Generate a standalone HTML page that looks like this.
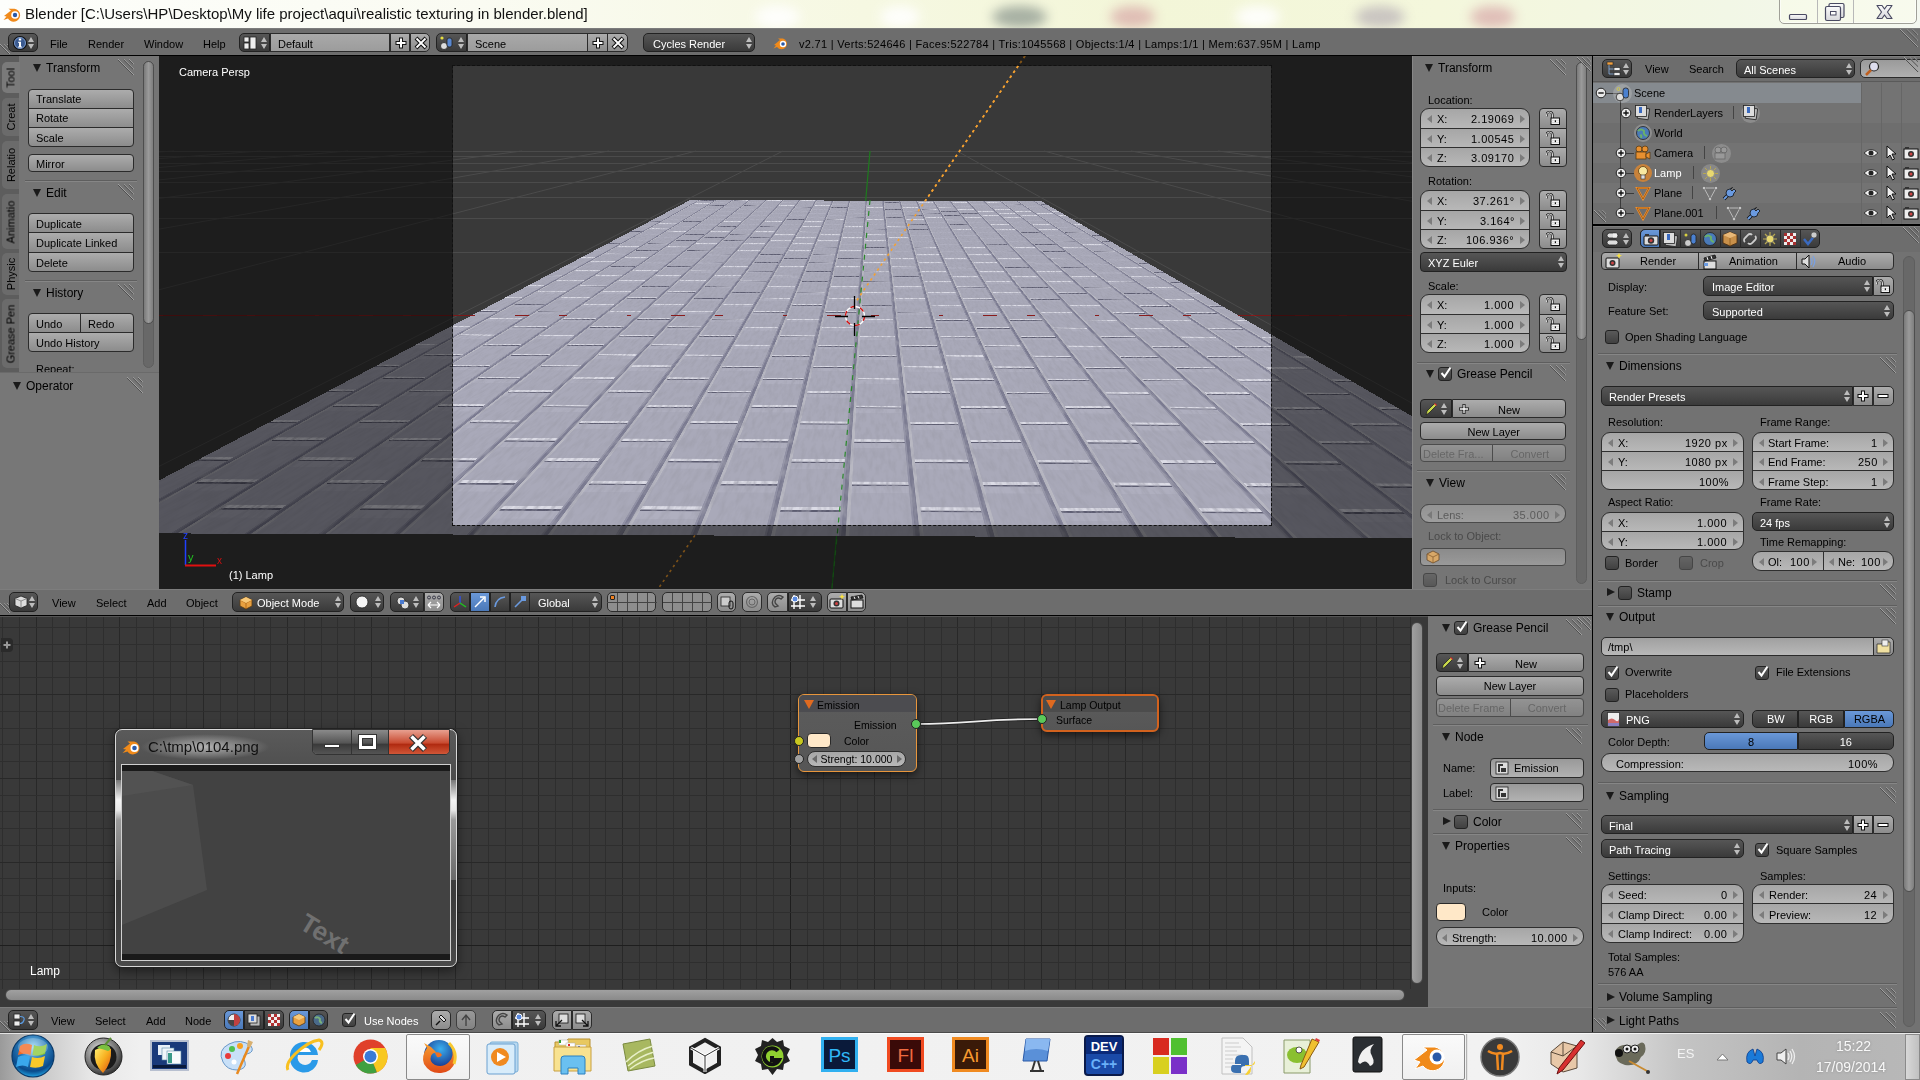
<!DOCTYPE html>
<html><head><meta charset="utf-8"><style>
*{margin:0;padding:0;box-sizing:border-box}
html,body{width:1920px;height:1080px;overflow:hidden;background:#000;font-family:"Liberation Sans",sans-serif;font-size:12px;color:#000}
.a{position:absolute}
.t{position:absolute;white-space:nowrap;line-height:14px;font-size:11px;will-change:transform}
.w{color:#fff}
.g{color:#4a4a4a}
.b{position:absolute;background:linear-gradient(#acacac,#8c8c8c);border:1px solid #2b2b2b;white-space:nowrap;font-size:12px;overflow:hidden}
.n{position:absolute;background:linear-gradient(#a6a6a6,#b8b8b8);border:1px solid #2f2f2f;white-space:nowrap;font-size:12px;overflow:hidden}
.m{position:absolute;background:linear-gradient(#565656,#3a3a3a);border:1px solid #222;color:#fff;white-space:nowrap;font-size:12px;overflow:hidden}
.tx{position:absolute;background:linear-gradient(#999,#b2b2b2);border:1px solid #2b2b2b;white-space:nowrap;font-size:12px;overflow:hidden}
.sel{background:linear-gradient(#6a98d8,#4a78b8)!important}
.c{position:absolute;width:14px;height:14px;background:linear-gradient(#5a5a5a,#404040);border:1px solid #222;border-radius:3px}
.hdr{position:absolute;background:#6d6d6d;border-top:1px solid #7d7d7d}
.sep{position:absolute;height:2px;border-top:1px solid #5e5e5e;border-bottom:1px solid #868686}
.tri{position:absolute;width:0;height:0;border-left:4.5px solid transparent;border-right:4.5px solid transparent;border-top:8px solid #1a1a1a}
.trr{position:absolute;width:0;height:0;border-top:4.5px solid transparent;border-bottom:4.5px solid transparent;border-left:8px solid #1a1a1a}
.arl{position:absolute;width:0;height:0;border-top:4px solid transparent;border-bottom:4px solid transparent;border-right:5px solid #7c7c7c}
.arr{position:absolute;width:0;height:0;border-top:4px solid transparent;border-bottom:4px solid transparent;border-left:5px solid #7c7c7c}
.ud{position:absolute;width:7px;height:14px}
.ud:before{content:"";position:absolute;left:0;top:1px;border-left:3.5px solid transparent;border-right:3.5px solid transparent;border-bottom:5px solid #bdbdbd}
.ud:after{content:"";position:absolute;left:0;top:8px;border-left:3.5px solid transparent;border-right:3.5px solid transparent;border-top:5px solid #bdbdbd}
.grip{position:absolute;width:16px;height:16px;background:repeating-linear-gradient(45deg,transparent 0 3px,#5a5a5a 3px 4px,#8a8a8a 4px 5px)}
.sb{position:absolute;border-radius:6px;border:1px solid #4e4e4e;background:linear-gradient(90deg,#7a7a7a,#9a9a9a 50%,#7e7e7e)}
.sbt{position:absolute;border-radius:6px;border:1px solid #5e5e5e;background:#686868}
</style></head><body>
<div class="a" id="title" style="left:0;top:0;width:1920px;height:28px;background:linear-gradient(90deg,#fdfefb 0%,#fafbf2 25%,#f6f8e2 45%,#f3f6d8 60%,#f4f7dc 75%,#f2f7e6 90%,#f4f7f0 100%)"></div>
<div class="a" style="left:0;top:28px;width:1920px;height:27px;background:#6d6d6d;border-top:1px solid #7c7c7c"></div>
<div class="a" style="left:0;top:55px;width:1920px;height:1px;background:#000"></div>
<div class="a" style="left:0;top:56px;width:159px;height:533px;background:#757575"></div>
<div class="a" id="view3d" style="left:159px;top:56px;width:1253px;height:533px;background:#393939;overflow:hidden">
<svg class="a" style="left:0;top:0" width="1253" height="533"><g stroke="#4b4b4b" stroke-width="1"><line x1="0" y1="95.5" x2="1253" y2="95.5"/><line x1="0" y1="100.5" x2="1253" y2="100.5"/><line x1="0" y1="107.5" x2="1253" y2="107.5"/><line x1="0" y1="115.5" x2="1253" y2="115.5"/><line x1="0" y1="126.5" x2="1253" y2="126.5"/><line x1="0" y1="141.5" x2="1253" y2="141.5"/><line x1="0" y1="162.5" x2="1253" y2="162.5"/><line x1="0" y1="196.5" x2="1253" y2="196.5"/><line x1="-507" y1="95" x2="-12142.6" y2="533"/><line x1="-420" y1="95" x2="-11227.2" y2="533"/><line x1="-333" y1="95" x2="-10311.8" y2="533"/><line x1="-246" y1="95" x2="-9396.39" y2="533"/><line x1="-159" y1="95" x2="-8481" y2="533"/><line x1="-72" y1="95" x2="-7565.61" y2="533"/><line x1="15" y1="95" x2="-6650.22" y2="533"/><line x1="102" y1="95" x2="-5734.83" y2="533"/><line x1="189" y1="95" x2="-4819.43" y2="533"/><line x1="276" y1="95" x2="-3904.04" y2="533"/><line x1="363" y1="95" x2="-2988.65" y2="533"/><line x1="450" y1="95" x2="-2073.26" y2="533"/><line x1="537" y1="95" x2="-1157.87" y2="533"/><line x1="624" y1="95" x2="-242.478" y2="533"/><line x1="798" y1="95" x2="1588.3" y2="533"/><line x1="885" y1="95" x2="2503.7" y2="533"/><line x1="972" y1="95" x2="3419.09" y2="533"/><line x1="1059" y1="95" x2="4334.48" y2="533"/><line x1="1146" y1="95" x2="5249.87" y2="533"/><line x1="1233" y1="95" x2="6165.26" y2="533"/><line x1="1320" y1="95" x2="7080.65" y2="533"/><line x1="1407" y1="95" x2="7996.04" y2="533"/><line x1="1494" y1="95" x2="8911.43" y2="533"/><line x1="1581" y1="95" x2="9826.83" y2="533"/><line x1="1668" y1="95" x2="10742.2" y2="533"/><line x1="1755" y1="95" x2="11657.6" y2="533"/><line x1="1842" y1="95" x2="12573" y2="533"/><line x1="1929" y1="95" x2="13488.4" y2="533"/></g><line x1="0" y1="259.5" x2="1253" y2="259.5" stroke="#7a1818" stroke-width="1"/><line x1="711" y1="95" x2="672.913" y2="533" stroke="#1e7a1e" stroke-width="1.2"/><line x1="866" y1="0" x2="499" y2="533" stroke="#f4a030" stroke-width="1.6" stroke-dasharray="2.5 3.5"/></svg>
<svg class="a" width="2100" height="2400" style="left:0;top:0;transform-origin:0 0;transform:matrix3d(0.1665537956,0.0002684541459,0,-7.758498968e-07,-0.2304996164,-0.01534145358,0,-0.0003228681766,0,0,1,0,530.8,144.2,0,1)">
<defs><pattern id="bp" width="200" height="100" patternUnits="userSpaceOnUse" x="50">
<rect width="200" height="100" fill="#a9a9b9"/>
<rect x="0" y="0" width="3" height="100" fill="#9090a4"/><rect x="3" y="0" width="6" height="100" fill="#7a7a90"/><rect x="9" y="0" width="5" height="100" fill="#b8b8c2"/>
<rect x="100" y="0" width="3" height="100" fill="#9090a4"/><rect x="103" y="0" width="6" height="100" fill="#7a7a90"/><rect x="109" y="0" width="5" height="100" fill="#b8b8c2"/>
<rect x="14" y="0" width="86" height="6" fill="#dcdce6"/><rect x="14" y="6" width="86" height="3" fill="#5c5c70"/>
<rect x="114" y="50" width="86" height="6" fill="#dcdce6"/><rect x="114" y="56" width="86" height="3" fill="#5c5c70"/>
<rect x="14" y="9" width="86" height="14" fill="#afafbf"/><rect x="114" y="59" width="86" height="14" fill="#afafbf"/>
</pattern></defs>
<filter id="nz" x="0" y="0" width="100%" height="100%"><feTurbulence type="fractalNoise" baseFrequency="0.12 0.04" numOctaves="3" seed="3"/><feColorMatrix type="matrix" values="0 0 0 0 0.35  0 0 0 0 0.35  0 0 0 0 0.42  0 0 0 1.6 -0.6"/></filter>
<rect width="2100" height="2400" fill="url(#bp)"/>
<rect width="2100" height="2400" filter="url(#nz)" opacity="1"/>
</svg>
<svg class="a" style="left:0;top:0" width="1253" height="533"><line x1="0" y1="259.5" x2="1253" y2="259.5" stroke="#8a1c1c" stroke-width="1" stroke-dasharray="4 40 14 30 8 60"/><line x1="711" y1="144" x2="672.913" y2="533" stroke="#2a8a2a" stroke-width="1.2" stroke-dasharray="5 6"/><line x1="866" y1="0" x2="696" y2="247" stroke="#f4a030" stroke-width="1.6" stroke-dasharray="2.5 3.5"/></svg>
<div class="a" style="left:0px;top:0px;width:1253px;height:10px;background:rgba(0,0,0,.49)"></div>
<div class="a" style="left:0px;top:469px;width:1253px;height:64px;background:rgba(0,0,0,.49)"></div>
<div class="a" style="left:0px;top:10px;width:294px;height:459px;background:rgba(0,0,0,.49)"></div>
<div class="a" style="left:1112px;top:10px;width:141px;height:459px;background:rgba(0,0,0,.49)"></div>
<div class="a" style="left:293px;top:9px;width:820px;height:461px;border:1px dashed #111"></div>
<svg class="a" style="left:675px;top:239px;" width="42" height="42"><circle cx="21" cy="21" r="9.5" fill="none" stroke="#fff" stroke-width="1.4"/><circle cx="21" cy="21" r="9.5" fill="none" stroke="#d01010" stroke-width="1.4" stroke-dasharray="4.97 4.97"/><path d="M1 21.5H14M28 21.5H41M20.5 1V14M20.5 28V41" stroke="#000" stroke-width="1.3"/></svg>
<div class="t w" style="left:20px;top:9px;font-size:11px">Camera Persp</div>
<div class="t w" style="left:70px;top:512px;font-size:11px">(1) Lamp</div>
<svg class="a" style="left:20px;top:472px;" width="50" height="40"><path d="M6.5 12V37" stroke="#2040ff" stroke-width="1.5"/><path d="M6 37.5H37" stroke="#e01010" stroke-width="2"/><text x="4" y="11" fill="#2040ff" font-size="10" font-family="Liberation Sans">z</text><text x="9" y="33" fill="#20c020" font-size="11" font-family="Liberation Sans">y</text><text x="38" y="36" fill="#d01010" font-size="10" font-family="Liberation Sans">x</text></svg>
</div>
<div class="a" style="left:1412px;top:56px;width:180px;height:533px;background:#757575;border-left:1px solid #878787"></div>
<div class="hdr" style="left:0;top:589px;width:1592px;height:26px"></div>
<div class="a" style="left:0;top:615px;width:1592px;height:1px;background:#000"></div>
<div class="a" style="left:0;top:616px;width:1428px;height:391px;background:#393939;overflow:hidden;border-top:1px solid #555">
<svg class="a" style="left:0;top:0" width="1428" height="391"><rect x="2" y="0" width="1" height="372" fill="#2e2e2e"/><rect x="19" y="0" width="1" height="372" fill="#2e2e2e"/><rect x="36" y="0" width="1" height="372" fill="#282828"/><rect x="52" y="0" width="1" height="372" fill="#2e2e2e"/><rect x="69" y="0" width="1" height="372" fill="#2e2e2e"/><rect x="86" y="0" width="1" height="372" fill="#2e2e2e"/><rect x="103" y="0" width="1" height="372" fill="#2e2e2e"/><rect x="119" y="0" width="1" height="372" fill="#282828"/><rect x="136" y="0" width="1" height="372" fill="#2e2e2e"/><rect x="153" y="0" width="1" height="372" fill="#2e2e2e"/><rect x="170" y="0" width="1" height="372" fill="#2e2e2e"/><rect x="186" y="0" width="1" height="372" fill="#2e2e2e"/><rect x="203" y="0" width="1" height="372" fill="#282828"/><rect x="220" y="0" width="1" height="372" fill="#2e2e2e"/><rect x="237" y="0" width="1" height="372" fill="#2e2e2e"/><rect x="254" y="0" width="1" height="372" fill="#2e2e2e"/><rect x="270" y="0" width="1" height="372" fill="#2e2e2e"/><rect x="287" y="0" width="1" height="372" fill="#282828"/><rect x="304" y="0" width="1" height="372" fill="#2e2e2e"/><rect x="321" y="0" width="1" height="372" fill="#2e2e2e"/><rect x="337" y="0" width="1" height="372" fill="#2e2e2e"/><rect x="354" y="0" width="1" height="372" fill="#2e2e2e"/><rect x="371" y="0" width="1" height="372" fill="#282828"/><rect x="388" y="0" width="1" height="372" fill="#2e2e2e"/><rect x="404" y="0" width="1" height="372" fill="#2e2e2e"/><rect x="421" y="0" width="1" height="372" fill="#2e2e2e"/><rect x="438" y="0" width="1" height="372" fill="#2e2e2e"/><rect x="455" y="0" width="1" height="372" fill="#282828"/><rect x="471" y="0" width="1" height="372" fill="#2e2e2e"/><rect x="488" y="0" width="1" height="372" fill="#2e2e2e"/><rect x="505" y="0" width="1" height="372" fill="#2e2e2e"/><rect x="522" y="0" width="1" height="372" fill="#2e2e2e"/><rect x="538" y="0" width="1" height="372" fill="#282828"/><rect x="555" y="0" width="1" height="372" fill="#2e2e2e"/><rect x="572" y="0" width="1" height="372" fill="#2e2e2e"/><rect x="589" y="0" width="1" height="372" fill="#2e2e2e"/><rect x="605" y="0" width="1" height="372" fill="#2e2e2e"/><rect x="622" y="0" width="1" height="372" fill="#282828"/><rect x="639" y="0" width="1" height="372" fill="#2e2e2e"/><rect x="656" y="0" width="1" height="372" fill="#2e2e2e"/><rect x="673" y="0" width="1" height="372" fill="#2e2e2e"/><rect x="689" y="0" width="1" height="372" fill="#2e2e2e"/><rect x="706" y="0" width="1" height="372" fill="#282828"/><rect x="723" y="0" width="1" height="372" fill="#2e2e2e"/><rect x="740" y="0" width="1" height="372" fill="#2e2e2e"/><rect x="756" y="0" width="1" height="372" fill="#2e2e2e"/><rect x="773" y="0" width="1" height="372" fill="#2e2e2e"/><rect x="790" y="0" width="1" height="372" fill="#1e1e1e"/><rect x="807" y="0" width="1" height="372" fill="#2e2e2e"/><rect x="823" y="0" width="1" height="372" fill="#2e2e2e"/><rect x="840" y="0" width="1" height="372" fill="#2e2e2e"/><rect x="857" y="0" width="1" height="372" fill="#2e2e2e"/><rect x="874" y="0" width="1" height="372" fill="#282828"/><rect x="890" y="0" width="1" height="372" fill="#2e2e2e"/><rect x="907" y="0" width="1" height="372" fill="#2e2e2e"/><rect x="924" y="0" width="1" height="372" fill="#2e2e2e"/><rect x="941" y="0" width="1" height="372" fill="#2e2e2e"/><rect x="957" y="0" width="1" height="372" fill="#282828"/><rect x="974" y="0" width="1" height="372" fill="#2e2e2e"/><rect x="991" y="0" width="1" height="372" fill="#2e2e2e"/><rect x="1008" y="0" width="1" height="372" fill="#2e2e2e"/><rect x="1024" y="0" width="1" height="372" fill="#2e2e2e"/><rect x="1041" y="0" width="1" height="372" fill="#282828"/><rect x="1058" y="0" width="1" height="372" fill="#2e2e2e"/><rect x="1075" y="0" width="1" height="372" fill="#2e2e2e"/><rect x="1092" y="0" width="1" height="372" fill="#2e2e2e"/><rect x="1108" y="0" width="1" height="372" fill="#2e2e2e"/><rect x="1125" y="0" width="1" height="372" fill="#282828"/><rect x="1142" y="0" width="1" height="372" fill="#2e2e2e"/><rect x="1159" y="0" width="1" height="372" fill="#2e2e2e"/><rect x="1175" y="0" width="1" height="372" fill="#2e2e2e"/><rect x="1192" y="0" width="1" height="372" fill="#2e2e2e"/><rect x="1209" y="0" width="1" height="372" fill="#282828"/><rect x="1226" y="0" width="1" height="372" fill="#2e2e2e"/><rect x="1242" y="0" width="1" height="372" fill="#2e2e2e"/><rect x="1259" y="0" width="1" height="372" fill="#2e2e2e"/><rect x="1276" y="0" width="1" height="372" fill="#2e2e2e"/><rect x="1293" y="0" width="1" height="372" fill="#282828"/><rect x="1309" y="0" width="1" height="372" fill="#2e2e2e"/><rect x="1326" y="0" width="1" height="372" fill="#2e2e2e"/><rect x="1343" y="0" width="1" height="372" fill="#2e2e2e"/><rect x="1360" y="0" width="1" height="372" fill="#2e2e2e"/><rect x="1376" y="0" width="1" height="372" fill="#282828"/><rect x="1393" y="0" width="1" height="372" fill="#2e2e2e"/><rect x="1410" y="0" width="1" height="372" fill="#2e2e2e"/><rect x="0" y="-7" width="1411" height="1" fill="#282828"/><rect x="0" y="10" width="1411" height="1" fill="#2e2e2e"/><rect x="0" y="27" width="1411" height="1" fill="#2e2e2e"/><rect x="0" y="44" width="1411" height="1" fill="#2e2e2e"/><rect x="0" y="60" width="1411" height="1" fill="#2e2e2e"/><rect x="0" y="77" width="1411" height="1" fill="#282828"/><rect x="0" y="94" width="1411" height="1" fill="#2e2e2e"/><rect x="0" y="111" width="1411" height="1" fill="#2e2e2e"/><rect x="0" y="127" width="1411" height="1" fill="#2e2e2e"/><rect x="0" y="144" width="1411" height="1" fill="#2e2e2e"/><rect x="0" y="161" width="1411" height="1" fill="#282828"/><rect x="0" y="178" width="1411" height="1" fill="#2e2e2e"/><rect x="0" y="194" width="1411" height="1" fill="#2e2e2e"/><rect x="0" y="211" width="1411" height="1" fill="#2e2e2e"/><rect x="0" y="228" width="1411" height="1" fill="#2e2e2e"/><rect x="0" y="245" width="1411" height="1" fill="#282828"/><rect x="0" y="261" width="1411" height="1" fill="#2e2e2e"/><rect x="0" y="278" width="1411" height="1" fill="#2e2e2e"/><rect x="0" y="295" width="1411" height="1" fill="#2e2e2e"/><rect x="0" y="312" width="1411" height="1" fill="#2e2e2e"/><rect x="0" y="328" width="1411" height="1" fill="#1e1e1e"/><rect x="0" y="345" width="1411" height="1" fill="#2e2e2e"/><rect x="0" y="362" width="1411" height="1" fill="#2e2e2e"/></svg>
</div>
<div class="a" style="left:1411px;top:622px;width:12px;height:362px;border-radius:6px;background:linear-gradient(90deg,#a0a0a0,#8a8a8a);border:1px solid #444"></div>
<div class="a" style="left:5px;top:989px;width:1400px;height:12px;border-radius:6px;background:linear-gradient(#a0a0a0,#8a8a8a);border:1px solid #444"></div>
<div class="a" style="left:1px;top:638px;width:12px;height:14px;background:#2a2a2a;border-radius:0 4px 4px 0"></div>
<svg class="a" style="left:2px;top:640px;" width="10" height="10"><path d="M5 1.5V8.5M1.5 5H8.5" stroke="#999" stroke-width="2"/></svg>
<div class="t w" style="left:30px;top:964px;font-size:12px">Lamp</div>
<svg class="a" style="left:900px;top:705px;" width="160" height="30"><path d="M16 19C70 19 80 14 142 14" fill="none" stroke="#222" stroke-width="3.5"/><path d="M16 19C70 19 80 14 142 14" fill="none" stroke="#eee" stroke-width="1.6"/></svg>
<div class="a" style="left:798px;top:694px;width:119px;height:78px;border-radius:6px;box-shadow:0 3px 8px rgba(0,0,0,.6);background:linear-gradient(#5c5c5c,#565656);border:1px solid #e8963c;overflow:hidden"><div class="a" style="left:0;top:0;width:117px;height:17px;background:#4c4c50"></div></div>
<div class="a" style="left:804px;top:700px;width:0;height:0;border-left:5px solid transparent;border-right:5px solid transparent;border-top:9px solid #e06a20"></div>
<div class="t " style="left:817px;top:697.5px;font-size:10.5px">Emission</div>
<div class="t " style="right:1023px;top:718px;font-size:10.5px">Emission</div>
<div class="a" style="left:807px;top:733px;width:24px;height:15px;border-radius:4px;background:#ffe8c8;border:1px solid #2a2a2a"></div>
<div class="t " style="left:844px;top:734px;font-size:10.5px">Color</div>
<div class="n" style="left:807px;top:751px;width:99px;height:16px;border-radius:8px"></div>
<div class="arl" style="left:812px;top:755px;border-right-color:#6a6a6a"></div><div class="arr" style="left:897px;top:755px;border-left-color:#6a6a6a"></div>
<div class="t " style="left:807px;width:99px;top:752px;text-align:center;font-size:10.5px">Strengt: 10.000</div>
<div class="a" style="left:911px;top:719px;width:10px;height:10px;border-radius:5px;background:#5ac85a;border:1px solid #222"></div>
<div class="a" style="left:794px;top:736px;width:10px;height:10px;border-radius:5px;background:#c8c820;border:1px solid #222"></div>
<div class="a" style="left:794px;top:754px;width:10px;height:10px;border-radius:5px;background:#a0a0a0;border:1px solid #222"></div>
<div class="a" style="left:1041px;top:694px;width:118px;height:38px;border-radius:6px;box-shadow:0 3px 8px rgba(0,0,0,.6);background:linear-gradient(#5c5c5c,#565656);border:2px solid #d2621e;overflow:hidden"><div class="a" style="left:0;top:0;width:114px;height:16px;background:#4c4c4c"></div></div>
<div class="a" style="left:1046px;top:700px;width:0;height:0;border-left:5px solid transparent;border-right:5px solid transparent;border-top:9px solid #e06a20"></div>
<div class="t " style="left:1060px;top:697.5px;font-size:10.5px">Lamp Output</div>
<div class="t " style="left:1056px;top:713px;font-size:10.5px">Surface</div>
<div class="a" style="left:1037px;top:714px;width:10px;height:10px;border-radius:5px;background:#5ac85a;border:1px solid #222"></div>
<div class="a" style="left:115px;top:729px;width:342px;height:238px;border-radius:7px;border:1px solid #d8d8d8;box-shadow:0 0 0 1px #222,0 4px 12px rgba(0,0,0,.5);background:linear-gradient(#5a5a5a,#464646 30%,#3c3c3c 70%,#4a4a4a)"></div>
<div class="a" style="left:116px;top:780px;width:5px;height:100px;background:linear-gradient(#777 0%,#f4f4f4 20%,#e8e8e8 30%,#9a9a9a 40%,#6a6a6a 100%)"></div>
<div class="a" style="left:451px;top:780px;width:5px;height:100px;background:linear-gradient(#777 0%,#f4f4f4 20%,#e8e8e8 30%,#9a9a9a 40%,#6a6a6a 100%)"></div>
<div class="a" style="left:140px;top:734px;width:130px;height:26px;border-radius:13px;background:radial-gradient(ellipse at center,rgba(255,255,255,.55),rgba(255,255,255,0) 70%)"></div>
<svg class="a" style="left:122px;top:737px;" width="21" height="20"><path d="M1 12 L8 6.5 L5.5 4.5 L12 4.5 A6.5 6.5 0 1 1 5.5 14.5 L0.5 16 L4 12.5Z" fill="#f08a1a"/><circle cx="12.5" cy="11" r="4" fill="#fff"/><circle cx="12.5" cy="11" r="2.3" fill="#2a5aa8"/></svg>
<div class="t" style="left:148px;top:738px;font-size:15px;line-height:18px;color:#111">C:\tmp\0104.png</div>
<div class="a" style="left:312px;top:729px;width:138px;height:26px;border-radius:0 0 5px 5px;border:1px solid #333;overflow:hidden;box-shadow:inset 0 0 0 1px rgba(255,255,255,.35)"><div class="a" style="left:0;top:0;width:38px;height:26px;background:linear-gradient(#8a8a8a,#555 50%,#3a3a3a 55%,#5a5a5a)"></div><div class="a" style="left:38px;top:0;width:1px;height:26px;background:#333"></div><div class="a" style="left:39px;top:0;width:36px;height:26px;background:linear-gradient(#8a8a8a,#555 50%,#3a3a3a 55%,#5a5a5a)"></div><div class="a" style="left:75px;top:0;width:1px;height:26px;background:#333"></div><div class="a" style="left:76px;top:0;width:62px;height:26px;background:linear-gradient(#e8a090,#c84a30 50%,#b02a10 55%,#d86040)"></div></div>
<div class="a" style="left:324px;top:744px;width:16px;height:4px;background:#fff;border:1px solid #333"></div>
<div class="a" style="left:359px;top:735px;width:17px;height:14px;border:3px solid #fff;box-shadow:0 0 0 1px #333,inset 0 0 0 1px #333"></div>
<svg class="a" style="left:405px;top:733px;" width="26" height="20"><path d="M6 3L20 17M20 3L6 17" stroke="#333" stroke-width="6"/><path d="M6.5 3.5L19.5 16.5M19.5 3.5L6.5 16.5" stroke="#fff" stroke-width="3.5"/></svg>
<div class="a" style="left:121px;top:764px;width:330px;height:197px;border:1px solid #d0d0d0;background:#1a1a1a"></div>
<div class="a" style="left:122px;top:771px;width:328px;height:183px;background:#424242;overflow:hidden"><svg class="a" style="left:0;top:0" width="328" height="183"><path d="M0 0H30L71 14L85 119L0 154Z" fill="#4c4c4c"/><path d="M0 0H30L71 14L0 25Z" fill="#525252"/><text x="0" y="0" transform="translate(176 157) rotate(31)" font-family="Liberation Sans" font-weight="bold" font-size="26" fill="#707070">Text</text></svg></div>
<div class="a" style="left:1428px;top:616px;width:164px;height:391px;background:#757575"></div>
<div class="tri" style="left:1441.5px;top:623.5px"></div>
<div class="c" style="left:1453.5px;top:620.5px"><svg width="14" height="14" style="position:absolute;left:0;top:-2px"><path d="M2.5 7L5.5 10.5L11.5 1.5" fill="none" stroke="#fff" stroke-width="2"/></svg></div>
<div class="t " style="left:1472.5px;top:620.5px;font-size:12px">Grease Pencil</div>
<svg class="a" style="left:1566px;top:618.5px" width="16" height="16"><path d="M0 0L16 16" stroke="#a0a0a0" stroke-width="1"/><path d="M0 1L15 16" stroke="#505050" stroke-width="1"/><path d="M5.76 0L16 10.24" stroke="#a0a0a0" stroke-width="1"/><path d="M5.76 1L15 10.24" stroke="#505050" stroke-width="1"/><path d="M10.88 0L16 5.12" stroke="#a0a0a0" stroke-width="1"/><path d="M10.88 1L15 5.12" stroke="#505050" stroke-width="1"/></svg>
<div class="m" style="left:1436px;top:653px;width:32px;height:19px;border-radius:4px 0 0 4px"></div>
<svg class="a" style="left:1439px;top:655px;" width="16" height="16"><path d="M3 14L4 10L12 2L14 4L6 12Z" fill="#c8d84a" stroke="#222" stroke-width="0.8"/><path d="M12 2L14 4L13 5L11 3Z" fill="#e04040"/></svg>
<div class="ud" style="left:1457px;top:656px"></div>
<div class="b" style="left:1468px;top:653px;width:116px;height:19px;border-radius:0 4px 4px 0"></div>
<div class="t " style="left:1468px;width:116px;top:656.5px;text-align:center">New</div>
<svg class="a" style="left:1473px;top:656px;" width="14" height="14"><path d="M7 1.5V12.5M1.5 7H12.5" stroke="#111" stroke-width="4"/><path d="M7 2.5V11.5M2.5 7H11.5" stroke="#fff" stroke-width="2"/></svg>
<div class="b" style="left:1436px;top:676px;width:148px;height:20px;border-radius:4px 4px 4px 4px"></div>
<div class="t " style="left:1436px;width:148px;top:679.25px;text-align:center">New Layer</div>
<div class="b" style="left:1436px;top:698px;width:75px;height:19px;border-radius:4px 0 0 4px"></div>
<div class="t " style="left:1438px;top:701px;color:#5a5a5a">Delete Frame</div>
<div class="b" style="left:1510px;top:698px;width:74px;height:19px;border-radius:0 4px 4px 0"></div>
<div class="t " style="left:1510px;width:74px;top:701px;text-align:center;color:#5a5a5a">Convert</div>
<div class="a" style="left:1436px;top:698px;width:148px;height:19px;background:rgba(117,117,117,.45);border-radius:4px"></div>
<div class="sep" style="left:1433px;top:724px;width:155px"></div>
<div class="tri" style="left:1441.5px;top:732.5px"></div>
<div class="t " style="left:1454.5px;top:729.5px;font-size:12px">Node</div>
<svg class="a" style="left:1566px;top:727.5px" width="16" height="16"><path d="M0 0L16 16" stroke="#a0a0a0" stroke-width="1"/><path d="M0 1L15 16" stroke="#505050" stroke-width="1"/><path d="M5.76 0L16 10.24" stroke="#a0a0a0" stroke-width="1"/><path d="M5.76 1L15 10.24" stroke="#505050" stroke-width="1"/><path d="M10.88 0L16 5.12" stroke="#a0a0a0" stroke-width="1"/><path d="M10.88 1L15 5.12" stroke="#505050" stroke-width="1"/></svg>
<div class="t " style="left:1443px;top:761px">Name:</div>
<div class="tx" style="left:1490px;top:758px;width:94px;height:20px;border-radius:4px"></div>
<svg class="a" style="left:1494px;top:760px;" width="16" height="16"><rect x="2" y="2" width="12" height="12" fill="#ddd" stroke="#222" stroke-width=".8"/><path d="M4 4H9V6H6V12H4Z M7 8H12V12H7Z" fill="#333"/></svg>
<div class="t " style="left:1514px;top:761px">Emission</div>
<div class="t " style="left:1443px;top:785.5px">Label:</div>
<div class="tx" style="left:1490px;top:783px;width:94px;height:19px;border-radius:4px"></div>
<svg class="a" style="left:1494px;top:785px;" width="16" height="16"><rect x="2" y="2" width="12" height="12" fill="#ddd" stroke="#222" stroke-width=".8"/><path d="M4 4H9V6H6V12H4Z M7 8H12V12H7Z" fill="#333"/></svg>
<div class="sep" style="left:1433px;top:809px;width:155px"></div>
<div class="trr" style="left:1442.5px;top:817px"></div>
<div class="c" style="left:1453.5px;top:814.5px"></div>
<div class="t " style="left:1472.5px;top:814.5px;font-size:12px">Color</div>
<svg class="a" style="left:1566px;top:812.5px" width="16" height="16"><path d="M0 0L16 16" stroke="#a0a0a0" stroke-width="1"/><path d="M0 1L15 16" stroke="#505050" stroke-width="1"/><path d="M5.76 0L16 10.24" stroke="#a0a0a0" stroke-width="1"/><path d="M5.76 1L15 10.24" stroke="#505050" stroke-width="1"/><path d="M10.88 0L16 5.12" stroke="#a0a0a0" stroke-width="1"/><path d="M10.88 1L15 5.12" stroke="#505050" stroke-width="1"/></svg>
<div class="sep" style="left:1433px;top:833px;width:155px"></div>
<div class="tri" style="left:1441.5px;top:841.5px"></div>
<div class="t " style="left:1454.5px;top:838.5px;font-size:12px">Properties</div>
<svg class="a" style="left:1566px;top:836.5px" width="16" height="16"><path d="M0 0L16 16" stroke="#a0a0a0" stroke-width="1"/><path d="M0 1L15 16" stroke="#505050" stroke-width="1"/><path d="M5.76 0L16 10.24" stroke="#a0a0a0" stroke-width="1"/><path d="M5.76 1L15 10.24" stroke="#505050" stroke-width="1"/><path d="M10.88 0L16 5.12" stroke="#a0a0a0" stroke-width="1"/><path d="M10.88 1L15 5.12" stroke="#505050" stroke-width="1"/></svg>
<div class="t " style="left:1443px;top:881px">Inputs:</div>
<div class="a" style="left:1436px;top:903px;width:30px;height:18px;border-radius:4px;background:#ffe8c8;border:1px solid #2a2a2a"></div>
<div class="t " style="left:1482px;top:905px">Color</div>
<div class="n" style="left:1436px;top:927px;width:148px;height:19px;border-radius:9px 9px 9px 9px"></div>
<div class="arl" style="left:1442px;top:934px"></div>
<div class="arr" style="left:1573px;top:934px"></div>
<div class="t " style="left:1452px;top:931px">Strength:</div>
<div class="t " style="right:352px;top:931px;letter-spacing:.5px">10.000</div>
<svg class="a" style="left:1578px;top:617px" width="13" height="13"><path d="M0 0L13 13" stroke="#a0a0a0" stroke-width="1"/><path d="M0 1L12 13" stroke="#505050" stroke-width="1"/><path d="M4.68 0L13 8.32" stroke="#a0a0a0" stroke-width="1"/><path d="M4.68 1L12 8.32" stroke="#505050" stroke-width="1"/><path d="M8.84 0L13 4.16" stroke="#a0a0a0" stroke-width="1"/><path d="M8.84 1L12 4.16" stroke="#505050" stroke-width="1"/></svg>
<div class="hdr" style="left:0;top:1007px;width:1592px;height:25px"></div>
<div class="a" style="left:1592px;top:56px;width:1px;height:976px;background:#000"></div>
<div class="a" style="left:1593px;top:56px;width:327px;height:168px;background:#727272"></div>
<div class="a" style="left:1593px;top:224px;width:327px;height:2px;background:#000"></div>
<div class="a" style="left:1593px;top:226px;width:327px;height:806px;background:#727272"></div>
<div class="a" style="left:0;top:56px;width:19px;height:316px;background:#5d5d5d"></div>
<div class="a" style="left:2px;top:62px;width:18px;height:31px;background:#7a7a7a;border-radius:5px 0 0 5px"></div>
<div class="t" style="left:-5px;top:70.5px;width:31px;height:14px;text-align:center;transform:rotate(-90deg);transform-origin:50% 50%">Tool</div>
<div class="a" style="left:2px;top:98px;width:17px;height:38px;background:#6b6b6b;border-radius:5px 0 0 5px"></div>
<div class="t" style="left:-8.5px;top:110px;width:38px;height:14px;text-align:center;transform:rotate(-90deg);transform-origin:50% 50%">Creat</div>
<div class="a" style="left:2px;top:141px;width:17px;height:48px;background:#6b6b6b;border-radius:5px 0 0 5px"></div>
<div class="t" style="left:-13.5px;top:158px;width:48px;height:14px;text-align:center;transform:rotate(-90deg);transform-origin:50% 50%">Relatio</div>
<div class="a" style="left:2px;top:194px;width:17px;height:55px;background:#6b6b6b;border-radius:5px 0 0 5px"></div>
<div class="t" style="left:-17px;top:214.5px;width:55px;height:14px;text-align:center;transform:rotate(-90deg);transform-origin:50% 50%">Animatio</div>
<div class="a" style="left:2px;top:253px;width:17px;height:42px;background:#6b6b6b;border-radius:5px 0 0 5px"></div>
<div class="t" style="left:-10.5px;top:267px;width:42px;height:14px;text-align:center;transform:rotate(-90deg);transform-origin:50% 50%">Physic</div>
<div class="a" style="left:2px;top:299px;width:17px;height:69px;background:#6b6b6b;border-radius:5px 0 0 5px"></div>
<div class="t" style="left:-24px;top:326.5px;width:69px;height:14px;text-align:center;transform:rotate(-90deg);transform-origin:50% 50%">Grease Pen</div>
<div class="tri" style="left:33px;top:63.5px"></div>
<div class="t " style="left:46px;top:60.5px;font-size:12px">Transform</div>
<svg class="a" style="left:118px;top:58.5px" width="16" height="16"><path d="M0 0L16 16" stroke="#a0a0a0" stroke-width="1"/><path d="M0 1L15 16" stroke="#505050" stroke-width="1"/><path d="M5.76 0L16 10.24" stroke="#a0a0a0" stroke-width="1"/><path d="M5.76 1L15 10.24" stroke="#505050" stroke-width="1"/><path d="M10.88 0L16 5.12" stroke="#a0a0a0" stroke-width="1"/><path d="M10.88 1L15 5.12" stroke="#505050" stroke-width="1"/></svg>
<div class="b" style="left:28px;top:89px;width:106px;height:20px;border-radius:4px 4px 0 0"></div>
<div class="t " style="left:35.5px;top:92px">Translate</div>
<div class="b" style="left:28px;top:108px;width:106px;height:21px;border-radius:0 0 0 0"></div>
<div class="t " style="left:35.5px;top:111.25px">Rotate</div>
<div class="b" style="left:28px;top:127px;width:106px;height:20px;border-radius:0 0 4px 4px"></div>
<div class="t " style="left:35.5px;top:130.75px">Scale</div>
<div class="b" style="left:28px;top:154px;width:106px;height:18px;border-radius:4px 4px 4px 4px"></div>
<div class="t " style="left:35.5px;top:156.75px">Mirror</div>
<div class="sep" style="left:25px;top:180px;width:112px"></div>
<div class="tri" style="left:33px;top:188.5px"></div>
<div class="t " style="left:46px;top:185.5px;font-size:12px">Edit</div>
<svg class="a" style="left:118px;top:183.5px" width="16" height="16"><path d="M0 0L16 16" stroke="#a0a0a0" stroke-width="1"/><path d="M0 1L15 16" stroke="#505050" stroke-width="1"/><path d="M5.76 0L16 10.24" stroke="#a0a0a0" stroke-width="1"/><path d="M5.76 1L15 10.24" stroke="#505050" stroke-width="1"/><path d="M10.88 0L16 5.12" stroke="#a0a0a0" stroke-width="1"/><path d="M10.88 1L15 5.12" stroke="#505050" stroke-width="1"/></svg>
<div class="b" style="left:28px;top:213px;width:106px;height:20px;border-radius:4px 4px 0 0"></div>
<div class="t " style="left:35.5px;top:216.5px">Duplicate</div>
<div class="b" style="left:28px;top:232px;width:106px;height:21px;border-radius:0 0 0 0"></div>
<div class="t " style="left:35.5px;top:236px">Duplicate Linked</div>
<div class="b" style="left:28px;top:252px;width:106px;height:20px;border-radius:0 0 4px 4px"></div>
<div class="t " style="left:35.5px;top:256px">Delete</div>
<div class="sep" style="left:25px;top:280px;width:112px"></div>
<div class="tri" style="left:33px;top:288.5px"></div>
<div class="t " style="left:46px;top:285.5px;font-size:12px">History</div>
<svg class="a" style="left:118px;top:283.5px" width="16" height="16"><path d="M0 0L16 16" stroke="#a0a0a0" stroke-width="1"/><path d="M0 1L15 16" stroke="#505050" stroke-width="1"/><path d="M5.76 0L16 10.24" stroke="#a0a0a0" stroke-width="1"/><path d="M5.76 1L15 10.24" stroke="#505050" stroke-width="1"/><path d="M10.88 0L16 5.12" stroke="#a0a0a0" stroke-width="1"/><path d="M10.88 1L15 5.12" stroke="#505050" stroke-width="1"/></svg>
<div class="b" style="left:28px;top:313px;width:53px;height:20px;border-radius:4px 0 0 0"></div>
<div class="t " style="left:35.5px;top:316.5px">Undo</div>
<div class="b" style="left:80px;top:313px;width:54px;height:20px;border-radius:0 4px 0 0"></div>
<div class="t " style="left:87.5px;top:316.5px">Redo</div>
<div class="b" style="left:28px;top:332px;width:106px;height:20px;border-radius:0 0 4px 4px"></div>
<div class="t " style="left:35.5px;top:336px">Undo History</div>
<div class="t " style="left:36px;top:362px">Repeat:</div>
<div class="sbt" style="left:143px;top:61px;width:11px;height:307px"></div>
<div class="sb" style="left:143px;top:61px;width:11px;height:263px"></div>
<div class="a" style="left:0;top:372px;width:159px;height:217px;background:#777;border-top:1px solid #6a6a6a"></div>
<div class="tri" style="left:13px;top:381.5px"></div>
<div class="t " style="left:26px;top:378.5px;font-size:12px">Operator</div>
<svg class="a" style="left:127px;top:376.5px" width="16" height="16"><path d="M0 0L16 16" stroke="#a0a0a0" stroke-width="1"/><path d="M0 1L15 16" stroke="#505050" stroke-width="1"/><path d="M5.76 0L16 10.24" stroke="#a0a0a0" stroke-width="1"/><path d="M5.76 1L15 10.24" stroke="#505050" stroke-width="1"/><path d="M10.88 0L16 5.12" stroke="#a0a0a0" stroke-width="1"/><path d="M10.88 1L15 5.12" stroke="#505050" stroke-width="1"/></svg>
<div class="tri" style="left:1425px;top:63.5px"></div>
<div class="t " style="left:1438px;top:60.5px;font-size:12px">Transform</div>
<svg class="a" style="left:1550px;top:58.5px" width="16" height="16"><path d="M0 0L16 16" stroke="#a0a0a0" stroke-width="1"/><path d="M0 1L15 16" stroke="#505050" stroke-width="1"/><path d="M5.76 0L16 10.24" stroke="#a0a0a0" stroke-width="1"/><path d="M5.76 1L15 10.24" stroke="#505050" stroke-width="1"/><path d="M10.88 0L16 5.12" stroke="#a0a0a0" stroke-width="1"/><path d="M10.88 1L15 5.12" stroke="#505050" stroke-width="1"/></svg>
<div class="t " style="left:1428px;top:92.5px">Location:</div>
<div class="n" style="left:1420px;top:108px;width:110px;height:21px;border-radius:9px 9px 0 0"></div>
<div class="arl" style="left:1426.5px;top:115.25px"></div>
<div class="arr" style="left:1519.5px;top:115.25px"></div>
<div class="t " style="left:1436.5px;top:112.25px">X:</div>
<div class="t " style="right:405.5px;top:112.25px;letter-spacing:.5px">2.19069</div>
<div class="b" style="left:1539px;top:108px;width:28px;height:21px;border-radius:4px 4px 0 0"></div>
<svg class="a" style="left:1546px;top:110.25px;" width="15" height="16"><path d="M6.5 8.5V5a3 3 0 0 0-6 0V6.5" fill="none" stroke="#111" stroke-width="2.2"/><path d="M6.5 8.5V5a3 3 0 0 0-6 0V6.5" fill="none" stroke="#f2f2f2" stroke-width="0.9"/><rect x="5" y="8" width="8.5" height="6.5" fill="#f2f2f2" stroke="#111" stroke-width="1"/><path d="M5.5 10.5H13M5.5 12.5H13" stroke="#ccc" stroke-width=".6"/><rect x="8.8" y="10.3" width="1.2" height="1.8" fill="#111"/></svg>
<div class="n" style="left:1420px;top:128px;width:110px;height:21px;border-radius:0 0 0 0"></div>
<div class="arl" style="left:1426.5px;top:134.75px"></div>
<div class="arr" style="left:1519.5px;top:134.75px"></div>
<div class="t " style="left:1436.5px;top:131.75px">Y:</div>
<div class="t " style="right:405.5px;top:131.75px;letter-spacing:.5px">1.00545</div>
<div class="b" style="left:1539px;top:128px;width:28px;height:21px;border-radius:0 0 0 0"></div>
<svg class="a" style="left:1546px;top:129.75px;" width="15" height="16"><path d="M6.5 8.5V5a3 3 0 0 0-6 0V6.5" fill="none" stroke="#111" stroke-width="2.2"/><path d="M6.5 8.5V5a3 3 0 0 0-6 0V6.5" fill="none" stroke="#f2f2f2" stroke-width="0.9"/><rect x="5" y="8" width="8.5" height="6.5" fill="#f2f2f2" stroke="#111" stroke-width="1"/><path d="M5.5 10.5H13M5.5 12.5H13" stroke="#ccc" stroke-width=".6"/><rect x="8.8" y="10.3" width="1.2" height="1.8" fill="#111"/></svg>
<div class="n" style="left:1420px;top:147px;width:110px;height:20px;border-radius:0 0 9px 9px"></div>
<div class="arl" style="left:1426.5px;top:154.25px"></div>
<div class="arr" style="left:1519.5px;top:154.25px"></div>
<div class="t " style="left:1436.5px;top:151.25px">Z:</div>
<div class="t " style="right:405.5px;top:151.25px;letter-spacing:.5px">3.09170</div>
<div class="b" style="left:1539px;top:147px;width:28px;height:20px;border-radius:0 0 4px 4px"></div>
<svg class="a" style="left:1546px;top:149.25px;" width="15" height="16"><path d="M6.5 8.5V5a3 3 0 0 0-6 0V6.5" fill="none" stroke="#111" stroke-width="2.2"/><path d="M6.5 8.5V5a3 3 0 0 0-6 0V6.5" fill="none" stroke="#f2f2f2" stroke-width="0.9"/><rect x="5" y="8" width="8.5" height="6.5" fill="#f2f2f2" stroke="#111" stroke-width="1"/><path d="M5.5 10.5H13M5.5 12.5H13" stroke="#ccc" stroke-width=".6"/><rect x="8.8" y="10.3" width="1.2" height="1.8" fill="#111"/></svg>
<div class="t " style="left:1428px;top:174px">Rotation:</div>
<div class="n" style="left:1420px;top:190px;width:110px;height:21px;border-radius:9px 9px 0 0"></div>
<div class="arl" style="left:1426.5px;top:197.25px"></div>
<div class="arr" style="left:1519.5px;top:197.25px"></div>
<div class="t " style="left:1436.5px;top:194.25px">X:</div>
<div class="t " style="right:405.5px;top:194.25px;letter-spacing:.5px">37.261°</div>
<div class="b" style="left:1539px;top:190px;width:28px;height:21px;border-radius:4px 4px 0 0"></div>
<svg class="a" style="left:1546px;top:192.25px;" width="15" height="16"><path d="M6.5 8.5V5a3 3 0 0 0-6 0V6.5" fill="none" stroke="#111" stroke-width="2.2"/><path d="M6.5 8.5V5a3 3 0 0 0-6 0V6.5" fill="none" stroke="#f2f2f2" stroke-width="0.9"/><rect x="5" y="8" width="8.5" height="6.5" fill="#f2f2f2" stroke="#111" stroke-width="1"/><path d="M5.5 10.5H13M5.5 12.5H13" stroke="#ccc" stroke-width=".6"/><rect x="8.8" y="10.3" width="1.2" height="1.8" fill="#111"/></svg>
<div class="n" style="left:1420px;top:210px;width:110px;height:21px;border-radius:0 0 0 0"></div>
<div class="arl" style="left:1426.5px;top:216.75px"></div>
<div class="arr" style="left:1519.5px;top:216.75px"></div>
<div class="t " style="left:1436.5px;top:213.75px">Y:</div>
<div class="t " style="right:405.5px;top:213.75px;letter-spacing:.5px">3.164°</div>
<div class="b" style="left:1539px;top:210px;width:28px;height:21px;border-radius:0 0 0 0"></div>
<svg class="a" style="left:1546px;top:211.75px;" width="15" height="16"><path d="M6.5 8.5V5a3 3 0 0 0-6 0V6.5" fill="none" stroke="#111" stroke-width="2.2"/><path d="M6.5 8.5V5a3 3 0 0 0-6 0V6.5" fill="none" stroke="#f2f2f2" stroke-width="0.9"/><rect x="5" y="8" width="8.5" height="6.5" fill="#f2f2f2" stroke="#111" stroke-width="1"/><path d="M5.5 10.5H13M5.5 12.5H13" stroke="#ccc" stroke-width=".6"/><rect x="8.8" y="10.3" width="1.2" height="1.8" fill="#111"/></svg>
<div class="n" style="left:1420px;top:229px;width:110px;height:20px;border-radius:0 0 9px 9px"></div>
<div class="arl" style="left:1426.5px;top:236.25px"></div>
<div class="arr" style="left:1519.5px;top:236.25px"></div>
<div class="t " style="left:1436.5px;top:233.25px">Z:</div>
<div class="t " style="right:405.5px;top:233.25px;letter-spacing:.5px">106.936°</div>
<div class="b" style="left:1539px;top:229px;width:28px;height:20px;border-radius:0 0 4px 4px"></div>
<svg class="a" style="left:1546px;top:231.25px;" width="15" height="16"><path d="M6.5 8.5V5a3 3 0 0 0-6 0V6.5" fill="none" stroke="#111" stroke-width="2.2"/><path d="M6.5 8.5V5a3 3 0 0 0-6 0V6.5" fill="none" stroke="#f2f2f2" stroke-width="0.9"/><rect x="5" y="8" width="8.5" height="6.5" fill="#f2f2f2" stroke="#111" stroke-width="1"/><path d="M5.5 10.5H13M5.5 12.5H13" stroke="#ccc" stroke-width=".6"/><rect x="8.8" y="10.3" width="1.2" height="1.8" fill="#111"/></svg>
<div class="m" style="left:1420px;top:252px;width:147px;height:20px;border-radius:4px 4px 4px 4px"></div>
<div class="t w" style="left:1427.5px;top:256.25px">XYZ Euler</div>
<div class="ud" style="left:1557.5px;top:255.25px"></div>
<div class="t " style="left:1428px;top:278.5px">Scale:</div>
<div class="n" style="left:1420px;top:294px;width:110px;height:21px;border-radius:9px 9px 0 0"></div>
<div class="arl" style="left:1426.5px;top:301.25px"></div>
<div class="arr" style="left:1519.5px;top:301.25px"></div>
<div class="t " style="left:1436.5px;top:298.25px">X:</div>
<div class="t " style="right:405.5px;top:298.25px;letter-spacing:.5px">1.000</div>
<div class="b" style="left:1539px;top:294px;width:28px;height:21px;border-radius:4px 4px 0 0"></div>
<svg class="a" style="left:1546px;top:296.25px;" width="15" height="16"><path d="M6.5 8.5V5a3 3 0 0 0-6 0V6.5" fill="none" stroke="#111" stroke-width="2.2"/><path d="M6.5 8.5V5a3 3 0 0 0-6 0V6.5" fill="none" stroke="#f2f2f2" stroke-width="0.9"/><rect x="5" y="8" width="8.5" height="6.5" fill="#f2f2f2" stroke="#111" stroke-width="1"/><path d="M5.5 10.5H13M5.5 12.5H13" stroke="#ccc" stroke-width=".6"/><rect x="8.8" y="10.3" width="1.2" height="1.8" fill="#111"/></svg>
<div class="n" style="left:1420px;top:314px;width:110px;height:21px;border-radius:0 0 0 0"></div>
<div class="arl" style="left:1426.5px;top:320.75px"></div>
<div class="arr" style="left:1519.5px;top:320.75px"></div>
<div class="t " style="left:1436.5px;top:317.75px">Y:</div>
<div class="t " style="right:405.5px;top:317.75px;letter-spacing:.5px">1.000</div>
<div class="b" style="left:1539px;top:314px;width:28px;height:21px;border-radius:0 0 0 0"></div>
<svg class="a" style="left:1546px;top:315.75px;" width="15" height="16"><path d="M6.5 8.5V5a3 3 0 0 0-6 0V6.5" fill="none" stroke="#111" stroke-width="2.2"/><path d="M6.5 8.5V5a3 3 0 0 0-6 0V6.5" fill="none" stroke="#f2f2f2" stroke-width="0.9"/><rect x="5" y="8" width="8.5" height="6.5" fill="#f2f2f2" stroke="#111" stroke-width="1"/><path d="M5.5 10.5H13M5.5 12.5H13" stroke="#ccc" stroke-width=".6"/><rect x="8.8" y="10.3" width="1.2" height="1.8" fill="#111"/></svg>
<div class="n" style="left:1420px;top:333px;width:110px;height:20px;border-radius:0 0 9px 9px"></div>
<div class="arl" style="left:1426.5px;top:340.25px"></div>
<div class="arr" style="left:1519.5px;top:340.25px"></div>
<div class="t " style="left:1436.5px;top:337.25px">Z:</div>
<div class="t " style="right:405.5px;top:337.25px;letter-spacing:.5px">1.000</div>
<div class="b" style="left:1539px;top:333px;width:28px;height:20px;border-radius:0 0 4px 4px"></div>
<svg class="a" style="left:1546px;top:335.25px;" width="15" height="16"><path d="M6.5 8.5V5a3 3 0 0 0-6 0V6.5" fill="none" stroke="#111" stroke-width="2.2"/><path d="M6.5 8.5V5a3 3 0 0 0-6 0V6.5" fill="none" stroke="#f2f2f2" stroke-width="0.9"/><rect x="5" y="8" width="8.5" height="6.5" fill="#f2f2f2" stroke="#111" stroke-width="1"/><path d="M5.5 10.5H13M5.5 12.5H13" stroke="#ccc" stroke-width=".6"/><rect x="8.8" y="10.3" width="1.2" height="1.8" fill="#111"/></svg>
<div class="sep" style="left:1417px;top:362px;width:153px"></div>
<div class="tri" style="left:1426px;top:369.5px"></div>
<div class="c" style="left:1438px;top:366.5px"><svg width="14" height="14" style="position:absolute;left:0;top:-2px"><path d="M2.5 7L5.5 10.5L11.5 1.5" fill="none" stroke="#fff" stroke-width="2"/></svg></div>
<div class="t " style="left:1457px;top:366.5px;font-size:12px">Grease Pencil</div>
<svg class="a" style="left:1550px;top:364.5px" width="16" height="16"><path d="M0 0L16 16" stroke="#a0a0a0" stroke-width="1"/><path d="M0 1L15 16" stroke="#505050" stroke-width="1"/><path d="M5.76 0L16 10.24" stroke="#a0a0a0" stroke-width="1"/><path d="M5.76 1L15 10.24" stroke="#505050" stroke-width="1"/><path d="M10.88 0L16 5.12" stroke="#a0a0a0" stroke-width="1"/><path d="M10.88 1L15 5.12" stroke="#505050" stroke-width="1"/></svg>
<div class="m" style="left:1420px;top:399px;width:32px;height:19px;border-radius:4px 0 0 4px"></div>
<svg class="a" style="left:1423px;top:401px;" width="16" height="16"><path d="M3 14L4 10L12 2L14 4L6 12Z" fill="#c8d84a" stroke="#222" stroke-width="0.8"/><path d="M12 2L14 4L13 5L11 3Z" fill="#e04040"/></svg>
<div class="ud" style="left:1441px;top:402px"></div>
<div class="b" style="left:1452px;top:399px;width:114px;height:19px;border-radius:0 4px 4px 0"></div>
<div class="t " style="left:1452px;width:114px;top:402.5px;text-align:center">New</div>
<svg class="a" style="left:1457px;top:402px;" width="14" height="14"><path d="M7 2V12M2 7H12" stroke="#111" stroke-width="3"/><path d="M7 2.8V11.2M2.8 7H11.2" stroke="#fff" stroke-width="1.3"/></svg>
<div class="b" style="left:1420px;top:422px;width:146px;height:18px;border-radius:4px 4px 4px 4px"></div>
<div class="t " style="left:1420.5px;width:145.5px;top:424.75px;text-align:center">New Layer</div>
<div class="b" style="left:1420px;top:444px;width:73px;height:18px;border-radius:4px 0 0 4px"></div>
<div class="t " style="left:1422.5px;top:446.75px;color:#5a5a5a">Delete Fra...</div>
<div class="b" style="left:1492px;top:444px;width:74px;height:18px;border-radius:0 4px 4px 0"></div>
<div class="t " style="left:1492.5px;width:73.5px;top:446.75px;text-align:center;color:#5a5a5a">Convert</div>
<div class="a" style="left:1420px;top:444px;width:146px;height:19px;background:rgba(117,117,117,.45);border-radius:4px"></div>
<div class="sep" style="left:1417px;top:470px;width:153px"></div>
<div class="tri" style="left:1426px;top:478.5px"></div>
<div class="t " style="left:1439px;top:475.5px;font-size:12px">View</div>
<svg class="a" style="left:1550px;top:473.5px" width="16" height="16"><path d="M0 0L16 16" stroke="#a0a0a0" stroke-width="1"/><path d="M0 1L15 16" stroke="#505050" stroke-width="1"/><path d="M5.76 0L16 10.24" stroke="#a0a0a0" stroke-width="1"/><path d="M5.76 1L15 10.24" stroke="#505050" stroke-width="1"/><path d="M10.88 0L16 5.12" stroke="#a0a0a0" stroke-width="1"/><path d="M10.88 1L15 5.12" stroke="#505050" stroke-width="1"/></svg>
<div class="n" style="left:1420px;top:504px;width:146px;height:19px;border-radius:9px 9px 9px 9px"></div>
<div class="arl" style="left:1426.5px;top:510.5px"></div>
<div class="arr" style="left:1555px;top:510.5px"></div>
<div class="t " style="left:1436.5px;top:507.5px;color:#4a4a4a">Lens:</div>
<div class="t " style="right:370px;top:507.5px;color:#4a4a4a;letter-spacing:.5px">35.000</div>
<div class="a" style="left:1420px;top:504px;width:146px;height:19px;background:rgba(117,117,117,.4);border-radius:9px"></div>
<div class="t g" style="left:1428px;top:529px">Lock to Object:</div>
<div class="tx" style="left:1420px;top:548px;width:146px;height:18px;border-radius:4px;opacity:.6"></div>
<svg class="a" style="left:1426px;top:550px;" width="14" height="14"><path d="M7 1L13 4V10L7 13L1 10V4Z" fill="#d8a868" stroke="#6a4a2a" stroke-width="0.8"/><path d="M1 4L7 7L13 4M7 7V13" fill="none" stroke="#8a6030" stroke-width="0.8"/></svg>
<div class="c" style="left:1423px;top:573px;opacity:.55"></div>
<div class="t g" style="left:1445px;top:572.5px">Lock to Cursor</div>
<div class="sbt" style="left:1576px;top:62px;width:11px;height:522px"></div>
<div class="sb" style="left:1576px;top:62px;width:11px;height:278px"></div>
<svg class="a" style="left:1577px;top:57px" width="14" height="14"><path d="M0 0L14 14" stroke="#a0a0a0" stroke-width="1"/><path d="M0 1L13 14" stroke="#505050" stroke-width="1"/><path d="M5.04 0L14 8.96" stroke="#a0a0a0" stroke-width="1"/><path d="M5.04 1L13 8.96" stroke="#505050" stroke-width="1"/><path d="M9.52 0L14 4.48" stroke="#a0a0a0" stroke-width="1"/><path d="M9.52 1L13 4.48" stroke="#505050" stroke-width="1"/></svg>
<svg class="a" style="left:0px;top:44px" width="10" height="10"><path d="M0 0L10 10" stroke="#a0a0a0" stroke-width="1"/><path d="M0 1L9 10" stroke="#505050" stroke-width="1"/><path d="M3.6 0L10 6.4" stroke="#a0a0a0" stroke-width="1"/><path d="M3.6 1L9 6.4" stroke="#505050" stroke-width="1"/><path d="M6.8 0L10 3.2" stroke="#a0a0a0" stroke-width="1"/><path d="M6.8 1L9 3.2" stroke="#505050" stroke-width="1"/></svg>
<svg class="a" style="left:0px;top:603px" width="10" height="10"><path d="M0 0L10 10" stroke="#a0a0a0" stroke-width="1"/><path d="M0 1L9 10" stroke="#505050" stroke-width="1"/><path d="M3.6 0L10 6.4" stroke="#a0a0a0" stroke-width="1"/><path d="M3.6 1L9 6.4" stroke="#505050" stroke-width="1"/><path d="M6.8 0L10 3.2" stroke="#a0a0a0" stroke-width="1"/><path d="M6.8 1L9 3.2" stroke="#505050" stroke-width="1"/></svg>
<svg class="a" style="left:0px;top:1021px" width="10" height="10"><path d="M0 0L10 10" stroke="#a0a0a0" stroke-width="1"/><path d="M0 1L9 10" stroke="#505050" stroke-width="1"/><path d="M3.6 0L10 6.4" stroke="#a0a0a0" stroke-width="1"/><path d="M3.6 1L9 6.4" stroke="#505050" stroke-width="1"/><path d="M6.8 0L10 3.2" stroke="#a0a0a0" stroke-width="1"/><path d="M6.8 1L9 3.2" stroke="#505050" stroke-width="1"/></svg>
<div class="m" style="left:8px;top:33px;width:30px;height:19px;border-radius:5px 5px 5px 5px"></div>
<svg class="a" style="left:11.5px;top:34.75px;" width="16" height="16"><circle cx="8" cy="8" r="6.5" fill="#3a5a90" stroke="#111" stroke-width="1.2"/><circle cx="8" cy="8" r="5.5" fill="none" stroke="#8aa8d8" stroke-width="0.8"/><rect x="6.8" y="3.5" width="2.4" height="2" fill="#fff"/><path d="M6 6.8H9V11.5H10V12.5H6V11.5H7V7.8H6Z" fill="#fff"/></svg>
<div class="ud" style="left:28px;top:35.75px"></div>
<div class="t " style="left:50px;top:37px">File</div>
<div class="t " style="left:88px;top:37px">Render</div>
<div class="t " style="left:144px;top:37px">Window</div>
<div class="t " style="left:203px;top:37px">Help</div>
<div class="m" style="left:239px;top:33px;width:31px;height:19px;border-radius:5px 0 0 5px"></div>
<svg class="a" style="left:242.5px;top:34.75px;" width="16" height="16"><rect x="1" y="2" width="5" height="5" fill="#eee" stroke="#222" stroke-width=".8"/><rect x="1" y="8" width="5" height="6" fill="#eee" stroke="#222" stroke-width=".8"/><rect x="7" y="2" width="6" height="12" fill="#eee" stroke="#222" stroke-width=".8"/></svg>
<div class="ud" style="left:261px;top:35.75px"></div>
<div class="tx" style="left:270px;top:33px;width:120px;height:19px;border-radius:0;background:linear-gradient(#a9a9a9,#9c9c9c)"></div>
<div class="t " style="left:278px;top:37px">Default</div>
<div class="b" style="left:390px;top:33px;width:20px;height:19px;border-radius:0"></div>
<svg class="a" style="left:393.5px;top:36px;" width="14" height="14"><path d="M7 1.5V12.5M1.5 7H12.5" stroke="#111" stroke-width="4"/><path d="M7 2.5V11.5M2.5 7H11.5" stroke="#fff" stroke-width="2"/></svg>
<div class="b" style="left:410px;top:33px;width:20px;height:19px;border-radius:0 5px 5px 0"></div>
<svg class="a" style="left:413.5px;top:36px;" width="14" height="14"><path d="M2 2L12 12M12 2L2 12" stroke="#111" stroke-width="4"/><path d="M2.5 2.5L11.5 11.5M11.5 2.5L2.5 11.5" stroke="#fff" stroke-width="1.8"/></svg>
<div class="m" style="left:436px;top:33px;width:31px;height:19px;border-radius:5px 0 0 5px"></div>
<svg class="a" style="left:439px;top:34.75px;" width="16" height="16"><circle cx="5" cy="11" r="3.5" fill="#ddd" stroke="#222" stroke-width=".8"/><rect x="8" y="3" width="5" height="9" rx="2" fill="#5a88d0" stroke="#222" stroke-width=".8"/><circle cx="3" cy="3" r="1.6" fill="#e8e040"/></svg>
<div class="ud" style="left:457.5px;top:35.75px"></div>
<div class="tx" style="left:467px;top:33px;width:121px;height:19px;border-radius:0;background:linear-gradient(#a9a9a9,#9c9c9c)"></div>
<div class="t " style="left:475px;top:37px">Scene</div>
<div class="b" style="left:587px;top:33px;width:21px;height:19px;border-radius:0"></div>
<svg class="a" style="left:590.5px;top:36px;" width="14" height="14"><path d="M7 1.5V12.5M1.5 7H12.5" stroke="#111" stroke-width="4"/><path d="M7 2.5V11.5M2.5 7H11.5" stroke="#fff" stroke-width="2"/></svg>
<div class="b" style="left:607px;top:33px;width:21px;height:19px;border-radius:0 5px 5px 0"></div>
<svg class="a" style="left:610.5px;top:36px;" width="14" height="14"><path d="M2 2L12 12M12 2L2 12" stroke="#111" stroke-width="4"/><path d="M2.5 2.5L11.5 11.5M11.5 2.5L2.5 11.5" stroke="#fff" stroke-width="1.8"/></svg>
<div class="m" style="left:643px;top:33px;width:112px;height:19px;border-radius:5px 5px 5px 5px"></div>
<div class="t w" style="left:652.5px;top:36.75px">Cycles Render</div>
<div class="ud" style="left:745.5px;top:35.75px"></div>
<svg class="a" style="left:772px;top:35px;" width="18" height="16"><path d="M2 10 L8 5 L6 3.5 L11 3.5 A5.5 5.5 0 1 1 5 12 L1.5 13.5 L4 10.5Z" fill="#f08a1a"/><circle cx="11" cy="9" r="3.2" fill="#fff"/><circle cx="11" cy="9" r="1.8" fill="#2a5aa8"/></svg>
<div class="t " style="left:799px;top:37px;letter-spacing:.3px">v2.71 | Verts:524646 | Faces:522784 | Tris:1045568 | Objects:1/4 | Lamps:1/1 | Mem:637.95M | Lamp</div>
<svg class="a" style="left:1900px;top:29px" width="18" height="18"><path d="M0 0L18 18" stroke="#a0a0a0" stroke-width="1"/><path d="M0 1L17 18" stroke="#505050" stroke-width="1"/><path d="M6.48 0L18 11.52" stroke="#a0a0a0" stroke-width="1"/><path d="M6.48 1L17 11.52" stroke="#505050" stroke-width="1"/><path d="M12.24 0L18 5.76" stroke="#a0a0a0" stroke-width="1"/><path d="M12.24 1L17 5.76" stroke="#505050" stroke-width="1"/></svg>
<div class="m" style="left:9px;top:592px;width:29px;height:20px;border-radius:5px 5px 5px 5px"></div>
<svg class="a" style="left:12.5px;top:594px;" width="16" height="16"><path d="M8 2L14 4.5V11.5L8 14L2 11.5V4.5Z" fill="#ddd" stroke="#222" stroke-width=".8"/><path d="M2 4.5L8 7L14 4.5M8 7V14" fill="none" stroke="#777" stroke-width=".8"/></svg>
<div class="ud" style="left:29px;top:595px"></div>
<div class="t " style="left:52px;top:596px">View</div>
<div class="t " style="left:96px;top:596px">Select</div>
<div class="t " style="left:147px;top:596px">Add</div>
<div class="t " style="left:186px;top:596px">Object</div>
<div class="m" style="left:232px;top:592px;width:112px;height:20px;border-radius:5px 5px 5px 5px"></div>
<div class="t w" style="left:256.5px;top:596px">Object Mode</div>
<div class="ud" style="left:335px;top:595px"></div>
<svg class="a" style="left:238px;top:594.5px;" width="16" height="16"><path d="M8 2L14 5V11L8 14L2 11V5Z" fill="#e8a040" stroke="#5a3a10" stroke-width=".8"/><path d="M2 5L8 8L14 5M8 8V14" fill="none" stroke="#a86010" stroke-width=".8"/><path d="M8 2L14 5L8 8L2 5Z" fill="#f8c878"/></svg>
<div class="m" style="left:350px;top:592px;width:34px;height:20px;border-radius:5px 5px 5px 5px"></div>
<svg class="a" style="left:353.5px;top:594px;" width="16" height="16"><circle cx="8" cy="8" r="6" fill="#f4f4f4" stroke="#222" stroke-width=".8"/></svg>
<div class="ud" style="left:375px;top:595px"></div>
<div class="m" style="left:390px;top:592px;width:34px;height:20px;border-radius:5px 0 0 5px"></div>
<svg class="a" style="left:395px;top:595px;" width="16" height="16"><circle cx="6" cy="6" r="4" fill="#ddd" stroke="#222" stroke-width=".8"/><circle cx="10" cy="10" r="4" fill="#ddd" stroke="#222" stroke-width=".8"/><rect x="5" y="5" width="4" height="4" fill="#4a7ad0"/></svg>
<div class="ud" style="left:413px;top:595px"></div>
<div class="b" style="left:424px;top:592px;width:20px;height:20px;border-radius:0 5px 5px 0"></div>
<svg class="a" style="left:426px;top:595px;" width="16" height="14"><circle cx="3" cy="2.5" r="1.5" fill="none" stroke="#223" stroke-width=".8"/><circle cx="8" cy="2.5" r="1.5" fill="none" stroke="#223" stroke-width=".8"/><circle cx="13" cy="2.5" r="1.5" fill="none" stroke="#223" stroke-width=".8"/><path d="M2 10H14M2 10L5 7M2 10L5 13M14 10L11 7M14 10L11 13" stroke="#fff" stroke-width="1.2" fill="none"/></svg>
<div class="m" style="left:450px;top:592px;width:20px;height:20px;border-radius:5px 0 0 5px"></div>
<svg class="a" style="left:452px;top:594px;" width="16" height="16"><path d="M8 9V2" stroke="#3050e0" stroke-width="1.5"/><path d="M8 9L2 13" stroke="#e02020" stroke-width="1.5"/><path d="M8 9L14 13" stroke="#20c020" stroke-width="1.5"/></svg>
<div class="m sel" style="left:470px;top:592px;width:20px;height:20px;border-radius:0"></div>
<svg class="a" style="left:472px;top:594px;" width="16" height="16"><path d="M3 13L12 4" stroke="#fff" stroke-width="1.5"/><path d="M8 3H13V8" fill="none" stroke="#fff" stroke-width="1.5"/></svg>
<div class="m" style="left:490px;top:592px;width:20px;height:20px;border-radius:0"></div>
<svg class="a" style="left:492px;top:594px;" width="16" height="16"><path d="M3 13Q4 4 13 3" stroke="#6a9ae0" stroke-width="1.6" fill="none"/></svg>
<div class="m" style="left:510px;top:592px;width:20px;height:20px;border-radius:0"></div>
<svg class="a" style="left:512px;top:594px;" width="16" height="16"><path d="M3 13L10 6" stroke="#6a9ae0" stroke-width="1.6"/><rect x="9" y="2" width="5" height="5" fill="#6a9ae0"/></svg>
<div class="m" style="left:529px;top:592px;width:73px;height:20px;border-radius:0 5px 5px 0"></div>
<div class="t w" style="left:537.5px;top:596px">Global</div>
<div class="ud" style="left:592px;top:595px"></div>
<div class="b" style="left:607px;top:592px;width:49px;height:20px;border-radius:5px 5px 5px 5px;background:#8e8e8e"></div>
<div class="a" style="left:616.9px;top:593px;width:1px;height:18px;background:#444"></div>
<div class="a" style="left:626.8px;top:593px;width:1px;height:18px;background:#444"></div>
<div class="a" style="left:636.7px;top:593px;width:1px;height:18px;background:#444"></div>
<div class="a" style="left:646.6px;top:593px;width:1px;height:18px;background:#444"></div>
<div class="a" style="left:607px;top:602px;width:49.5px;height:1px;background:#444"></div>
<div class="a" style="left:610px;top:595px;width:5px;height:5px;background:#f08020;border:1px solid #222;border-radius:1px"></div>
<div class="b" style="left:662px;top:592px;width:50px;height:20px;border-radius:5px 5px 5px 5px;background:#8e8e8e"></div>
<div class="a" style="left:672.3px;top:593px;width:1px;height:18px;background:#444"></div>
<div class="a" style="left:682.1px;top:593px;width:1px;height:18px;background:#444"></div>
<div class="a" style="left:691.9px;top:593px;width:1px;height:18px;background:#444"></div>
<div class="a" style="left:701.7px;top:593px;width:1px;height:18px;background:#444"></div>
<div class="a" style="left:662.5px;top:602px;width:49px;height:1px;background:#444"></div>
<div class="b" style="left:717px;top:592px;width:19px;height:20px;border-radius:5px 5px 5px 5px"></div>
<svg class="a" style="left:719px;top:594px;" width="16" height="16"><rect x="2" y="3" width="9" height="9" fill="#ccc" stroke="#222" stroke-width=".8"/><path d="M10 9a2 2 0 1 1 4 0V13a2 2 0 1 1 -4 0Z" fill="none" stroke="#111" stroke-width="1"/></svg>
<div class="b" style="left:742px;top:592px;width:20px;height:20px;border-radius:5px 5px 5px 5px"></div>
<svg class="a" style="left:744px;top:594px;" width="16" height="16"><circle cx="8" cy="8" r="5.5" fill="none" stroke="#666" stroke-width="1.2"/><circle cx="8" cy="8" r="3" fill="none" stroke="#666" stroke-width="1"/></svg>
<div class="b" style="left:767px;top:592px;width:21px;height:20px;border-radius:5px 0 0 5px"></div>
<svg class="a" style="left:770px;top:594px;" width="16" height="16"><path d="M5 13L3 11Q1 7 5 3Q9 0 13 3L11 5Q8 3 6 5Q4 8 6 10L8 12Z" fill="none" stroke="#444" stroke-width="1.4"/></svg>
<div class="m" style="left:788px;top:592px;width:34px;height:20px;border-radius:0 5px 5px 0"></div>
<svg class="a" style="left:790px;top:594px;" width="16" height="16"><path d="M4 1V15M10 1V15M1 6H15M1 12H15" stroke="#fff" stroke-width="1.4"/><circle cx="5" cy="5" r="3" fill="#5a8ae0" stroke="#fff" stroke-width="1"/></svg>
<div class="ud" style="left:810px;top:595px"></div>
<div class="b" style="left:827px;top:592px;width:20px;height:20px;border-radius:5px 0 0 5px"></div>
<svg class="a" style="left:829px;top:594px;" width="16" height="16"><rect x="1" y="5" width="13" height="9" rx="1" fill="#ddd" stroke="#111" stroke-width="1"/><circle cx="7.5" cy="9.5" r="3" fill="#333"/><circle cx="7.5" cy="9.5" r="1.5" fill="#d04040"/><path d="M13 0L14 2L16 2.5L14 3.5L13 5.5L12 3.5L10 2.5L12 2Z" fill="#f8e040"/></svg>
<div class="b" style="left:847px;top:592px;width:19px;height:20px;border-radius:0 5px 5px 0"></div>
<svg class="a" style="left:849px;top:594px;" width="16" height="16"><rect x="2" y="6" width="12" height="8" fill="#ddd" stroke="#111" stroke-width="1"/><path d="M2 3L13 1L14 4L3 6Z" fill="#333" stroke="#111" stroke-width=".8"/><path d="M5 2.5L6 5M9 2L10 4.5" stroke="#eee" stroke-width="1"/></svg>
<div class="m" style="left:8px;top:1010px;width:30px;height:20px;border-radius:5px 5px 5px 5px"></div>
<svg class="a" style="left:11.5px;top:1012px;" width="16" height="16"><rect x="2" y="2" width="6" height="5" fill="#eee" stroke="#222" stroke-width=".8"/><rect x="2" y="9" width="6" height="5" fill="#eee" stroke="#222" stroke-width=".8"/><path d="M8 4.5Q13 4.5 12 8Q11 11.5 8 11.5" stroke="#5a9ae0" stroke-width="1.2" fill="none"/></svg>
<div class="ud" style="left:28px;top:1013px"></div>
<div class="t " style="left:50.5px;top:1014px">View</div>
<div class="t " style="left:95px;top:1014px">Select</div>
<div class="t " style="left:146px;top:1014px">Add</div>
<div class="t " style="left:185px;top:1014px">Node</div>
<div class="m sel" style="left:224px;top:1010px;width:20px;height:20px;border-radius:5px 0 0 5px"></div>
<svg class="a" style="left:226px;top:1012px;" width="16" height="16"><circle cx="8" cy="8" r="6" fill="#eee" stroke="#222" stroke-width=".8"/><path d="M8 2A6 6 0 0 1 8 14Z" fill="#c04040"/><path d="M8 8L2 8A6 6 0 0 0 8 14Z" fill="#444"/></svg>
<div class="m" style="left:244px;top:1010px;width:20px;height:20px;border-radius:0"></div>
<svg class="a" style="left:246px;top:1012px;" width="16" height="16"><rect x="4" y="4" width="10" height="10" fill="#bbb" stroke="#222" stroke-width=".8"/><rect x="2" y="2" width="9" height="9" fill="#ddd" stroke="#222" stroke-width=".8"/><rect x="5" y="4" width="3" height="5" fill="#4a7ad0"/></svg>
<div class="m" style="left:264px;top:1010px;width:20px;height:20px;border-radius:0 5px 5px 0"></div>
<svg class="a" style="left:266px;top:1012px;" width="16" height="16"><rect x="2" y="2" width="12" height="12" fill="#eee"/><path d="M2 2H5V5H2ZM8 2H11V5H8ZM5 5H8V8H5ZM11 5H14V8H11ZM2 8H5V11H2ZM8 8H11V11H8ZM5 11H8V14H5ZM11 11H14V14H11Z" fill="#b03030"/></svg>
<div class="m sel" style="left:289px;top:1010px;width:20px;height:20px;border-radius:5px 0 0 5px"></div>
<svg class="a" style="left:291px;top:1012px;" width="16" height="16"><path d="M8 2L14 5V11L8 14L2 11V5Z" fill="#e8a040" stroke="#5a3a10" stroke-width=".8"/><path d="M8 2L14 5L8 8L2 5Z" fill="#f8c878"/></svg>
<div class="m" style="left:309px;top:1010px;width:19px;height:20px;border-radius:0 5px 5px 0"></div>
<svg class="a" style="left:311px;top:1012px;" width="16" height="16"><circle cx="8" cy="8" r="6" fill="#4a6a8a" stroke="#222" stroke-width=".8"/><path d="M4 6Q7 4 9 7Q8 10 11 11" stroke="#7ab07a" stroke-width="2" fill="none"/></svg>
<div class="c" style="left:342px;top:1013px"><svg width="14" height="14" style="position:absolute;left:0;top:-2px"><path d="M2.5 7L5.5 10.5L11.5 1.5" fill="none" stroke="#fff" stroke-width="2"/></svg></div>
<div class="t w" style="left:364px;top:1014px">Use Nodes</div>
<div class="b" style="left:431px;top:1010px;width:20px;height:20px;border-radius:5px 5px 5px 5px"></div>
<svg class="a" style="left:433px;top:1012px;" width="16" height="16"><path d="M3 13L7 9" stroke="#111" stroke-width="1.5"/><path d="M6 5L11 10L13 8L8 3Z" fill="#ddd" stroke="#111" stroke-width="1"/></svg>
<div class="b" style="left:456px;top:1010px;width:20px;height:20px;border-radius:5px 5px 5px 5px;opacity:.7"></div>
<svg class="a" style="left:458px;top:1012px;" width="16" height="16"><path d="M8 14V4M4 8L8 3L12 8" fill="none" stroke="#444" stroke-width="1.4"/></svg>
<div class="b" style="left:492px;top:1010px;width:20px;height:20px;border-radius:5px 0 0 5px"></div>
<svg class="a" style="left:494px;top:1012px;" width="16" height="16"><path d="M5 13L3 11Q1 7 5 3Q9 0 13 3L11 5Q8 3 6 5Q4 8 6 10L8 12Z" fill="none" stroke="#444" stroke-width="1.4"/></svg>
<div class="m" style="left:512px;top:1010px;width:34px;height:20px;border-radius:0 5px 5px 0"></div>
<svg class="a" style="left:514px;top:1012px;" width="16" height="16"><path d="M4 1V15M10 1V15M1 6H15M1 12H15" stroke="#fff" stroke-width="1.4"/><circle cx="5" cy="5" r="3" fill="#5a8ae0" stroke="#fff" stroke-width="1"/></svg>
<div class="ud" style="left:535px;top:1013px"></div>
<div class="b" style="left:552px;top:1010px;width:20px;height:20px;border-radius:5px 0 0 5px"></div>
<svg class="a" style="left:554px;top:1012px;" width="16" height="16"><rect x="5" y="2" width="9" height="9" fill="#ddd" stroke="#111" stroke-width=".8"/><path d="M2 14L8 8M2 9V14H7" fill="none" stroke="#111" stroke-width="1.3"/></svg>
<div class="b" style="left:572px;top:1010px;width:20px;height:20px;border-radius:0 5px 5px 0"></div>
<svg class="a" style="left:574px;top:1012px;" width="16" height="16"><rect x="2" y="2" width="9" height="9" fill="#ddd" stroke="#111" stroke-width=".8"/><path d="M8 8L14 14M9 14H14V9" fill="none" stroke="#111" stroke-width="1.3"/></svg>
<div class="hdr" style="left:1593px;top:56px;width:327px;height:26px;border-bottom:1px solid #5a5a5a"></div>
<div class="m" style="left:1602px;top:59px;width:30px;height:19px;border-radius:5px 5px 5px 5px"></div>
<svg class="a" style="left:1605.5px;top:61px;" width="16" height="16"><rect x="1" y="1" width="6" height="3" fill="#f0a040" stroke="#222" stroke-width=".6"/><path d="M3 4V13H8M3 8H8" stroke="#8ab0e0" stroke-width=".8" fill="none"/><rect x="8" y="6.5" width="6" height="3" fill="#eee" stroke="#222" stroke-width=".6"/><rect x="8" y="11.5" width="6" height="3" fill="#eee" stroke="#222" stroke-width=".6"/></svg>
<div class="ud" style="left:1622.5px;top:62px"></div>
<div class="t " style="left:1645px;top:62px">View</div>
<div class="t " style="left:1689px;top:62px">Search</div>
<div class="m" style="left:1736px;top:59px;width:119px;height:19px;border-radius:5px 5px 5px 5px"></div>
<div class="t w" style="left:1743.5px;top:63px">All Scenes</div>
<div class="ud" style="left:1845.5px;top:62px"></div>
<div class="tx" style="left:1860px;top:59px;width:65px;height:19px;border-radius:5px;background:linear-gradient(#9a9a9a,#b0b0b0)"></div>
<svg class="a" style="left:1864px;top:60px;" width="16" height="18"><circle cx="10" cy="6.5" r="4.5" fill="#dde" stroke="#222" stroke-width="1.2"/><path d="M7 10L2 15" stroke="#c06020" stroke-width="2.5"/></svg>
<svg class="a" style="left:1904px;top:57px" width="15" height="15"><path d="M0 0L15 15" stroke="#a0a0a0" stroke-width="1"/><path d="M0 1L14 15" stroke="#505050" stroke-width="1"/><path d="M5.4 0L15 9.6" stroke="#a0a0a0" stroke-width="1"/><path d="M5.4 1L14 9.6" stroke="#505050" stroke-width="1"/><path d="M10.2 0L15 4.8" stroke="#a0a0a0" stroke-width="1"/><path d="M10.2 1L14 4.8" stroke="#505050" stroke-width="1"/></svg>
<div class="a" style="left:1593px;top:83px;width:327px;height:20px;background:#737373"></div>
<div class="a" style="left:1593px;top:103px;width:327px;height:20px;background:#737373"></div>
<div class="a" style="left:1593px;top:123px;width:327px;height:20px;background:#6e6e6e"></div>
<div class="a" style="left:1593px;top:143px;width:327px;height:20px;background:#737373"></div>
<div class="a" style="left:1593px;top:163px;width:327px;height:20px;background:#6e6e6e"></div>
<div class="a" style="left:1593px;top:183px;width:327px;height:20px;background:#737373"></div>
<div class="a" style="left:1593px;top:203px;width:327px;height:20px;background:#6e6e6e"></div>
<div class="a" style="left:1593px;top:83px;width:268px;height:20px;background:#858a8f"></div>
<div class="a" style="left:1861px;top:83px;width:1px;height:141px;background:#666"></div>
<div class="a" style="left:1881px;top:83px;width:1px;height:141px;background:#666"></div>
<div class="a" style="left:1901px;top:83px;width:1px;height:141px;background:#666"></div>
<div class="a" style="left:1620px;top:100px;width:1px;height:113px;background:#3a3a3a"></div>
<svg class="a" style="left:1595px;top:87px;" width="12" height="12"><circle cx="6" cy="6" r="4.8" fill="#e8e8e8" stroke="#222" stroke-width="1"/><path d="M3.3 6H8.7" stroke="#111" stroke-width="1.4"/></svg>
<div class="a" style="left:1606px;top:93px;width:16px;height:1px;background:#3a3a3a"></div>
<div class="a" style="left:1613px;top:84px;width:19px;height:19px;border-radius:10px;background:rgba(200,200,200,.35)"></div>
<svg class="a" style="left:1614px;top:85px;" width="18" height="18"><circle cx="6" cy="12" r="3.8" fill="#ddd" stroke="#222" stroke-width=".8"/><rect x="9" y="3" width="5.5" height="10" rx="2.5" fill="#4a80d0" stroke="#222" stroke-width=".8"/><circle cx="4.5" cy="4" r="1.5" fill="none" stroke="#d8d040" stroke-width=".8"/></svg>
<div class="t " style="left:1634px;top:86px">Scene</div>
<svg class="a" style="left:1620px;top:107px;" width="12" height="12"><circle cx="6" cy="6" r="4.8" fill="#e8e8e8" stroke="#222" stroke-width="1"/><path d="M3.3 6H8.7M6 3.3V8.7" stroke="#111" stroke-width="1.4"/></svg>
<svg class="a" style="left:1634px;top:104px;" width="17" height="17"><rect x="4" y="4" width="11" height="11" fill="#bbb" stroke="#222" stroke-width=".8" transform="rotate(8 9 9)"/><rect x="1.5" y="1.5" width="11" height="11" fill="#ddd" stroke="#222" stroke-width=".8"/><rect x="5" y="3" width="3" height="6" fill="#3a6ac0"/></svg>
<div class="t " style="left:1654px;top:106px">RenderLayers</div>
<div class="a" style="left:1733px;top:106px;width:1px;height:13px;background:#444"></div>
<div class="a" style="left:1741px;top:104px;width:19px;height:19px;border-radius:10px;background:rgba(200,200,200,.3)"></div>
<svg class="a" style="left:1742px;top:104px;" width="17" height="17"><rect x="4" y="4" width="11" height="11" fill="#bbb" stroke="#222" stroke-width=".8" transform="rotate(8 9 9)"/><rect x="1.5" y="1.5" width="11" height="11" fill="#ddd" stroke="#222" stroke-width=".8"/><rect x="5" y="3" width="3" height="6" fill="#3a6ac0"/></svg>
<div class="a" style="left:1634px;top:124px;width:18px;height:18px;border-radius:9px;background:rgba(200,200,200,.35)"></div>
<svg class="a" style="left:1635px;top:125px;" width="16" height="16"><circle cx="8" cy="8" r="6.5" fill="#4a7ab8" stroke="#222" stroke-width=".8"/><path d="M3 6Q6 3 9 6Q8 10 12 11M5 11Q7 9 6 13" stroke="#6ab06a" stroke-width="2" fill="none"/></svg>
<div class="t " style="left:1654px;top:126px">World</div>
<svg class="a" style="left:1615px;top:147px;" width="12" height="12"><circle cx="6" cy="6" r="4.8" fill="#e8e8e8" stroke="#222" stroke-width="1"/><path d="M3.3 6H8.7M6 3.3V8.7" stroke="#111" stroke-width="1.4"/></svg>
<div class="a" style="left:1626px;top:153px;width:8px;height:1px;background:#3a3a3a"></div>
<svg class="a" style="left:1615px;top:167px;" width="12" height="12"><circle cx="6" cy="6" r="4.8" fill="#e8e8e8" stroke="#222" stroke-width="1"/><path d="M3.3 6H8.7M6 3.3V8.7" stroke="#111" stroke-width="1.4"/></svg>
<div class="a" style="left:1626px;top:173px;width:8px;height:1px;background:#3a3a3a"></div>
<svg class="a" style="left:1615px;top:187px;" width="12" height="12"><circle cx="6" cy="6" r="4.8" fill="#e8e8e8" stroke="#222" stroke-width="1"/><path d="M3.3 6H8.7M6 3.3V8.7" stroke="#111" stroke-width="1.4"/></svg>
<div class="a" style="left:1626px;top:193px;width:8px;height:1px;background:#3a3a3a"></div>
<svg class="a" style="left:1615px;top:207px;" width="12" height="12"><circle cx="6" cy="6" r="4.8" fill="#e8e8e8" stroke="#222" stroke-width="1"/><path d="M3.3 6H8.7M6 3.3V8.7" stroke="#111" stroke-width="1.4"/></svg>
<div class="a" style="left:1626px;top:213px;width:8px;height:1px;background:#3a3a3a"></div>
<svg class="a" style="left:1634px;top:144px;" width="18" height="18"><circle cx="5" cy="5" r="3" fill="#e89030" stroke="#5a3a10" stroke-width=".8"/><circle cx="11" cy="5" r="3" fill="#e89030" stroke="#5a3a10" stroke-width=".8"/><rect x="2" y="8" width="10" height="7" fill="#e89030" stroke="#5a3a10" stroke-width=".8"/><path d="M12 10L16 8V15L12 13Z" fill="#e89030" stroke="#5a3a10" stroke-width=".8"/></svg>
<div class="t " style="left:1654px;top:146px">Camera</div>
<div class="a" style="left:1704px;top:146px;width:1px;height:13px;background:#444"></div>
<div class="a" style="left:1712px;top:144px;width:19px;height:19px;border-radius:10px;background:rgba(200,200,200,.3)"></div>
<svg class="a" style="left:1713px;top:145px;" width="17" height="17"><circle cx="5" cy="5" r="3" fill="#999" stroke="#666" stroke-width=".8"/><circle cx="11" cy="5" r="3" fill="#999" stroke="#666" stroke-width=".8"/><rect x="2" y="8" width="10" height="6" fill="#999" stroke="#666" stroke-width=".8"/></svg>
<div class="a" style="left:1634px;top:164px;width:18px;height:18px;border-radius:9px;background:#c8823a"></div>
<svg class="a" style="left:1635px;top:165px;" width="16" height="16"><circle cx="8" cy="6" r="4.5" fill="#f8e8a0" stroke="#5a3a10" stroke-width=".8"/><rect x="6" y="10" width="4" height="4" fill="#ddd" stroke="#333" stroke-width=".6"/></svg>
<div class="t w" style="left:1654px;top:166px">Lamp</div>
<div class="a" style="left:1693px;top:166px;width:1px;height:13px;background:#444"></div>
<div class="a" style="left:1701px;top:164px;width:19px;height:19px;border-radius:10px;background:rgba(200,200,200,.3)"></div>
<svg class="a" style="left:1702px;top:165px;" width="17" height="17"><circle cx="8.5" cy="8.5" r="4" fill="#e8d870" stroke="#888" stroke-width=".8"/><path d="M8.5 1V4M8.5 13V16M1 8.5H4M13 8.5H16M3 3L5 5M12 12L14 14M3 14L5 12M12 5L14 3" stroke="#b8a850" stroke-width="1"/></svg>
<svg class="a" style="left:1635px;top:185px;" width="16" height="16"><path d="M2 3H14L8 14Z" fill="none" stroke="#f09030" stroke-width="2.2"/><path d="M2 3H14L8 14Z" fill="none" stroke="#5a3000" stroke-width=".5"/></svg>
<div class="t " style="left:1654px;top:186px">Plane</div>
<div class="a" style="left:1692px;top:186px;width:1px;height:13px;background:#444"></div>
<svg class="a" style="left:1702px;top:185px;" width="16" height="16"><path d="M2 3H14L8 14Z" fill="none" stroke="#bbb" stroke-width="1"/><circle cx="2" cy="3" r="1.5" fill="#ddd" stroke="#555" stroke-width=".5"/><circle cx="14" cy="3" r="1.5" fill="#ddd" stroke="#555" stroke-width=".5"/><circle cx="8" cy="14" r="1.5" fill="#ddd" stroke="#555" stroke-width=".5"/></svg>
<svg class="a" style="left:1722px;top:185px;" width="16" height="16"><path d="M2 14L9 7" stroke="#111" stroke-width="3.5"/><path d="M2 14L9 7" stroke="#6a9ae0" stroke-width="2"/><path d="M8 4A4 4 0 1 0 12 8L14 6L12 4L10 6L8.5 4.5L10.5 2.5Z" fill="#6a9ae0" stroke="#111" stroke-width=".8"/></svg>
<svg class="a" style="left:1635px;top:205px;" width="16" height="16"><path d="M2 3H14L8 14Z" fill="none" stroke="#f09030" stroke-width="2.2"/><path d="M2 3H14L8 14Z" fill="none" stroke="#5a3000" stroke-width=".5"/></svg>
<div class="t " style="left:1654px;top:206px">Plane.001</div>
<div class="a" style="left:1716px;top:206px;width:1px;height:13px;background:#444"></div>
<svg class="a" style="left:1726px;top:205px;" width="16" height="16"><path d="M2 3H14L8 14Z" fill="none" stroke="#bbb" stroke-width="1"/><circle cx="2" cy="3" r="1.5" fill="#ddd" stroke="#555" stroke-width=".5"/><circle cx="14" cy="3" r="1.5" fill="#ddd" stroke="#555" stroke-width=".5"/><circle cx="8" cy="14" r="1.5" fill="#ddd" stroke="#555" stroke-width=".5"/></svg>
<svg class="a" style="left:1746px;top:205px;" width="16" height="16"><path d="M2 14L9 7" stroke="#111" stroke-width="3.5"/><path d="M2 14L9 7" stroke="#6a9ae0" stroke-width="2"/><path d="M8 4A4 4 0 1 0 12 8L14 6L12 4L10 6L8.5 4.5L10.5 2.5Z" fill="#6a9ae0" stroke="#111" stroke-width=".8"/></svg>
<svg class="a" style="left:1863px;top:147px;" width="16" height="12"><path d="M1 6Q8 -1 15 6Q8 13 1 6Z" fill="#eee" stroke="#222" stroke-width=".8"/><circle cx="8" cy="6" r="2.5" fill="#222"/></svg>
<svg class="a" style="left:1885px;top:145px;" width="12" height="16"><path d="M2 1V13L5 10L7.5 15L9.5 14L7 9H11Z" fill="#eee" stroke="#111" stroke-width="1"/></svg>
<svg class="a" style="left:1903px;top:146px;" width="16" height="14"><rect x="1" y="3" width="14" height="10" fill="#eee" stroke="#111" stroke-width="1"/><circle cx="8" cy="8" r="3" fill="#333"/><circle cx="8" cy="8" r="1.5" fill="#c44"/><rect x="2" y="1" width="4" height="2" fill="#333"/></svg>
<svg class="a" style="left:1863px;top:167px;" width="16" height="12"><path d="M1 6Q8 -1 15 6Q8 13 1 6Z" fill="#eee" stroke="#222" stroke-width=".8"/><circle cx="8" cy="6" r="2.5" fill="#222"/></svg>
<svg class="a" style="left:1885px;top:165px;" width="12" height="16"><path d="M2 1V13L5 10L7.5 15L9.5 14L7 9H11Z" fill="#eee" stroke="#111" stroke-width="1"/></svg>
<svg class="a" style="left:1903px;top:166px;" width="16" height="14"><rect x="1" y="3" width="14" height="10" fill="#eee" stroke="#111" stroke-width="1"/><circle cx="8" cy="8" r="3" fill="#333"/><circle cx="8" cy="8" r="1.5" fill="#c44"/><rect x="2" y="1" width="4" height="2" fill="#333"/></svg>
<svg class="a" style="left:1863px;top:187px;" width="16" height="12"><path d="M1 6Q8 -1 15 6Q8 13 1 6Z" fill="#eee" stroke="#222" stroke-width=".8"/><circle cx="8" cy="6" r="2.5" fill="#222"/></svg>
<svg class="a" style="left:1885px;top:185px;" width="12" height="16"><path d="M2 1V13L5 10L7.5 15L9.5 14L7 9H11Z" fill="#eee" stroke="#111" stroke-width="1"/></svg>
<svg class="a" style="left:1903px;top:186px;" width="16" height="14"><rect x="1" y="3" width="14" height="10" fill="#eee" stroke="#111" stroke-width="1"/><circle cx="8" cy="8" r="3" fill="#333"/><circle cx="8" cy="8" r="1.5" fill="#c44"/><rect x="2" y="1" width="4" height="2" fill="#333"/></svg>
<svg class="a" style="left:1863px;top:207px;" width="16" height="12"><path d="M1 6Q8 -1 15 6Q8 13 1 6Z" fill="#eee" stroke="#222" stroke-width=".8"/><circle cx="8" cy="6" r="2.5" fill="#222"/></svg>
<svg class="a" style="left:1885px;top:205px;" width="12" height="16"><path d="M2 1V13L5 10L7.5 15L9.5 14L7 9H11Z" fill="#eee" stroke="#111" stroke-width="1"/></svg>
<svg class="a" style="left:1903px;top:206px;" width="16" height="14"><rect x="1" y="3" width="14" height="10" fill="#eee" stroke="#111" stroke-width="1"/><circle cx="8" cy="8" r="3" fill="#333"/><circle cx="8" cy="8" r="1.5" fill="#c44"/><rect x="2" y="1" width="4" height="2" fill="#333"/></svg>
<svg class="a" style="left:1594px;top:210px" width="12" height="12"><path d="M0 0L12 12" stroke="#a0a0a0" stroke-width="1"/><path d="M0 1L11 12" stroke="#505050" stroke-width="1"/><path d="M4.32 0L12 7.68" stroke="#a0a0a0" stroke-width="1"/><path d="M4.32 1L11 7.68" stroke="#505050" stroke-width="1"/><path d="M8.16 0L12 3.84" stroke="#a0a0a0" stroke-width="1"/><path d="M8.16 1L11 3.84" stroke="#505050" stroke-width="1"/></svg>
<div class="hdr" style="left:1593px;top:226px;width:327px;height:26px"></div>
<div class="m" style="left:1602px;top:229px;width:30px;height:19px;border-radius:5px 5px 5px 5px"></div>
<svg class="a" style="left:1605.5px;top:231px;" width="16" height="16"><rect x="1" y="2" width="11" height="5" rx="2.5" fill="#ddd" stroke="#222" stroke-width=".8"/><rect x="1" y="9" width="11" height="5" rx="2.5" fill="#ddd" stroke="#222" stroke-width=".8"/><rect x="7" y="2.5" width="4" height="4" fill="#eee"/></svg>
<div class="ud" style="left:1622.5px;top:232px"></div>
<div class="m" style="left:1640px;top:229px;width:180px;height:19px;border-radius:5px 5px 5px 5px"></div>
<div class="m sel" style="left:1640px;top:229px;width:20px;height:19px;border-radius:5px 0 0 5px"></div>
<svg class="a" style="left:1642.5px;top:231px;" width="16" height="16"><rect x="1" y="5" width="14" height="9" rx="1" fill="#ddd" stroke="#111" stroke-width="1"/><circle cx="8" cy="9.5" r="3.2" fill="#333"/><circle cx="8" cy="9.5" r="1.6" fill="#c44"/><rect x="2" y="3" width="4" height="2" fill="#333"/></svg>
<div class="a" style="left:1660.4px;top:230px;width:1px;height:18px;background:#2a2a2a"></div>
<svg class="a" style="left:1662.4px;top:231px;" width="16" height="16"><rect x="4" y="4" width="11" height="11" fill="#bbb" stroke="#222" stroke-width=".8" transform="rotate(8 9 9)"/><rect x="1.5" y="1.5" width="11" height="11" fill="#ddd" stroke="#222" stroke-width=".8"/><rect x="5" y="3" width="3" height="6" fill="#3a6ac0"/></svg>
<div class="a" style="left:1680.3px;top:230px;width:1px;height:18px;background:#2a2a2a"></div>
<svg class="a" style="left:1682.3px;top:231px;" width="16" height="16"><circle cx="6" cy="12" r="3.5" fill="#ccc" stroke="#222" stroke-width=".8"/><rect x="9" y="3" width="5" height="10" rx="2.5" fill="#4a80d0" stroke="#222" stroke-width=".8"/><circle cx="4" cy="4" r="1.5" fill="#d8d040"/></svg>
<div class="a" style="left:1700.2px;top:230px;width:1px;height:18px;background:#2a2a2a"></div>
<svg class="a" style="left:1702.2px;top:231px;" width="16" height="16"><circle cx="8" cy="8" r="6.5" fill="#4a7ab8" stroke="#222" stroke-width=".8"/><path d="M3 6Q6 3 9 6Q8 10 12 11" stroke="#6ab06a" stroke-width="2" fill="none"/></svg>
<div class="a" style="left:1720.1px;top:230px;width:1px;height:18px;background:#2a2a2a"></div>
<svg class="a" style="left:1722.1px;top:231px;" width="16" height="16"><path d="M8 1L15 4V12L8 15L1 12V4Z" fill="#c8904a" stroke="#4a2a0a" stroke-width=".8"/><path d="M8 1L15 4L8 7L1 4Z" fill="#e8b878"/><path d="M8 7V15" stroke="#8a5a20" stroke-width=".8"/></svg>
<div class="a" style="left:1740px;top:230px;width:1px;height:18px;background:#2a2a2a"></div>
<svg class="a" style="left:1742px;top:231px;" width="16" height="16"><path d="M3 11a2.5 2.5 0 0 1 0-4L6 4a2.5 2.5 0 0 1 4 0M13 5a2.5 2.5 0 0 1 0 4L10 12a2.5 2.5 0 0 1-4 0" fill="none" stroke="#ccc" stroke-width="1.8"/></svg>
<div class="a" style="left:1759.9px;top:230px;width:1px;height:18px;background:#2a2a2a"></div>
<svg class="a" style="left:1761.9px;top:231px;" width="16" height="16"><circle cx="8" cy="8" r="4" fill="#e8d870" stroke="#666" stroke-width=".8"/><path d="M8 1V4M8 12V15M1 8H4M12 8H15M3 3L5 5M11 11L13 13M3 13L5 11M11 5L13 3" stroke="#b8a850" stroke-width="1.2"/></svg>
<div class="a" style="left:1779.8px;top:230px;width:1px;height:18px;background:#2a2a2a"></div>
<svg class="a" style="left:1781.8px;top:231px;" width="16" height="16"><rect x="2" y="2" width="12" height="12" fill="#eee"/><path d="M2 2H5V5H2ZM8 2H11V5H8ZM5 5H8V8H5ZM11 5H14V8H11ZM2 8H5V11H2ZM8 8H11V11H8ZM5 11H8V14H5ZM11 11H14V14H11Z" fill="#a83030"/></svg>
<div class="a" style="left:1799.7px;top:230px;width:1px;height:18px;background:#2a2a2a"></div>
<svg class="a" style="left:1801.7px;top:231px;" width="16" height="16"><path d="M2 8L6 13L13 4" fill="none" stroke="#3a6ac0" stroke-width="2.5"/><circle cx="12" cy="4" r="3" fill="#ccc" stroke="#444" stroke-width=".6"/></svg>
<svg class="a" style="left:1903px;top:227px" width="16" height="16"><path d="M0 0L16 16" stroke="#a0a0a0" stroke-width="1"/><path d="M0 1L15 16" stroke="#505050" stroke-width="1"/><path d="M5.76 0L16 10.24" stroke="#a0a0a0" stroke-width="1"/><path d="M5.76 1L15 10.24" stroke="#505050" stroke-width="1"/><path d="M10.88 0L16 5.12" stroke="#a0a0a0" stroke-width="1"/><path d="M10.88 1L15 5.12" stroke="#505050" stroke-width="1"/></svg>
<div class="b" style="left:1601px;top:252px;width:98px;height:18px;border-radius:4px 0 0 4px"></div>
<div class="b" style="left:1698px;top:252px;width:99px;height:18px;border-radius:0 0 0 0"></div>
<div class="b" style="left:1796px;top:252px;width:98px;height:18px;border-radius:0 4px 4px 0"></div>
<div class="t " style="left:1640px;top:254px">Render</div>
<div class="t " style="left:1729px;top:254px">Animation</div>
<div class="t " style="left:1838px;top:254px">Audio</div>
<svg class="a" style="left:1605px;top:253px;" width="17" height="17"><rect x="1" y="5" width="13" height="10" rx="1" fill="#ddd" stroke="#111" stroke-width="1"/><circle cx="7.5" cy="10" r="3" fill="#333"/><circle cx="7.5" cy="10" r="1.5" fill="#c44"/><path d="M14 0L15 2L17 2.5L15 3.5L14 5.5L13 3.5L11 2.5L13 2Z" fill="#f8e040"/></svg>
<svg class="a" style="left:1702px;top:253px;" width="17" height="17"><rect x="2" y="8" width="12" height="8" fill="#ddd" stroke="#111" stroke-width="1"/><path d="M2 5L13 2L14 5L3 8Z" fill="#333" stroke="#111" stroke-width=".8"/><path d="M5 4L6 7M9 3L10 6" stroke="#eee" stroke-width="1"/><rect x="2" y="10" width="4" height="3" fill="#6a9ae0"/></svg>
<svg class="a" style="left:1800px;top:253px;" width="17" height="17"><path d="M2 6H5L9 2V15L5 11H2Z" fill="#ddd" stroke="#111" stroke-width="1"/><path d="M11 5Q13 8.5 11 12M13 3Q16.5 8.5 13 14" fill="none" stroke="#7aa0e0" stroke-width="1.3"/></svg>
<div class="sbt" style="left:1903px;top:256px;width:12px;height:771px"></div>
<div class="sb" style="left:1903px;top:310px;width:12px;height:582px"></div>
<div class="t " style="left:1608px;top:279.5px">Display:</div>
<div class="m" style="left:1703px;top:276px;width:170px;height:20px;border-radius:5px 0 0 5px"></div>
<div class="t w" style="left:1711.5px;top:280px">Image Editor</div>
<div class="ud" style="left:1863.5px;top:279px"></div>
<div class="b" style="left:1873px;top:276px;width:21px;height:20px;border-radius:0 5px 5px 0"></div>
<svg class="a" style="left:1876.25px;top:278px;" width="15" height="16"><path d="M6.5 8.5V5a3 3 0 0 0-6 0V6.5" fill="none" stroke="#111" stroke-width="2.2"/><path d="M6.5 8.5V5a3 3 0 0 0-6 0V6.5" fill="none" stroke="#f2f2f2" stroke-width="0.9"/><rect x="5" y="8" width="8.5" height="6.5" fill="#f2f2f2" stroke="#111" stroke-width="1"/><path d="M5.5 10.5H13M5.5 12.5H13" stroke="#ccc" stroke-width=".6"/><rect x="8.8" y="10.3" width="1.2" height="1.8" fill="#111"/></svg>
<div class="t " style="left:1608px;top:304px">Feature Set:</div>
<div class="m" style="left:1703px;top:301px;width:191px;height:19px;border-radius:5px 5px 5px 5px"></div>
<div class="t w" style="left:1711.5px;top:305px">Supported</div>
<div class="ud" style="left:1884px;top:304px"></div>
<div class="c" style="left:1604.5px;top:330px"></div>
<div class="t " style="left:1625px;top:329.5px">Open Shading Language</div>
<div class="sep" style="left:1598px;top:353px;width:299px"></div>
<div class="tri" style="left:1606px;top:361.5px"></div>
<div class="t " style="left:1619px;top:358.5px;font-size:12px">Dimensions</div>
<svg class="a" style="left:1880px;top:356.5px" width="16" height="16"><path d="M0 0L16 16" stroke="#a0a0a0" stroke-width="1"/><path d="M0 1L15 16" stroke="#505050" stroke-width="1"/><path d="M5.76 0L16 10.24" stroke="#a0a0a0" stroke-width="1"/><path d="M5.76 1L15 10.24" stroke="#505050" stroke-width="1"/><path d="M10.88 0L16 5.12" stroke="#a0a0a0" stroke-width="1"/><path d="M10.88 1L15 5.12" stroke="#505050" stroke-width="1"/></svg>
<div class="m" style="left:1601px;top:386px;width:252px;height:20px;border-radius:5px 0 0 5px"></div>
<div class="t w" style="left:1608.5px;top:390px">Render Presets</div>
<div class="ud" style="left:1843.5px;top:389px"></div>
<div class="b" style="left:1853px;top:386px;width:20px;height:20px;border-radius:0"></div>
<svg class="a" style="left:1856px;top:389px;" width="14" height="14"><path d="M7 1.5V12.5M1.5 7H12.5" stroke="#111" stroke-width="4"/><path d="M7 2.5V11.5M2.5 7H11.5" stroke="#fff" stroke-width="2"/></svg>
<div class="b" style="left:1873px;top:386px;width:21px;height:20px;border-radius:0 5px 5px 0"></div>
<svg class="a" style="left:1876px;top:389px;" width="14" height="14"><path d="M1.5 7H12.5" stroke="#111" stroke-width="4"/><path d="M2.5 7H11.5" stroke="#fff" stroke-width="2"/></svg>
<div class="t " style="left:1608px;top:415px">Resolution:</div>
<div class="t " style="left:1759.5px;top:415px">Frame Range:</div>
<div class="n" style="left:1601px;top:432px;width:143px;height:20px;border-radius:9px 9px 0 0"></div>
<div class="arl" style="left:1607.5px;top:438.5px"></div>
<div class="arr" style="left:1732.5px;top:438.5px"></div>
<div class="t " style="left:1617.5px;top:435.5px">X:</div>
<div class="t " style="right:192.5px;top:435.5px;letter-spacing:.5px">1920 px</div>
<div class="n" style="left:1601px;top:451px;width:143px;height:20px;border-radius:0 0 0 0"></div>
<div class="arl" style="left:1607.5px;top:457.75px"></div>
<div class="arr" style="left:1732.5px;top:457.75px"></div>
<div class="t " style="left:1617.5px;top:454.75px">Y:</div>
<div class="t " style="right:192.5px;top:454.75px;letter-spacing:.5px">1080 px</div>
<div class="n" style="left:1601px;top:470px;width:143px;height:20px;border-radius:0 0 9px 9px"></div>
<div class="t " style="right:190.5px;top:474.5px;letter-spacing:.5px">100%</div>
<div class="n" style="left:1752px;top:432px;width:142px;height:20px;border-radius:9px 9px 0 0"></div>
<div class="arl" style="left:1758.5px;top:438.5px"></div>
<div class="arr" style="left:1882.5px;top:438.5px"></div>
<div class="t " style="left:1767.5px;top:435.5px">Start Frame:</div>
<div class="t " style="right:42.5px;top:435.5px;letter-spacing:.5px">1</div>
<div class="n" style="left:1752px;top:451px;width:142px;height:20px;border-radius:0 0 0 0"></div>
<div class="arl" style="left:1758.5px;top:457.75px"></div>
<div class="arr" style="left:1882.5px;top:457.75px"></div>
<div class="t " style="left:1767.5px;top:454.75px">End Frame:</div>
<div class="t " style="right:42.5px;top:454.75px;letter-spacing:.5px">250</div>
<div class="n" style="left:1752px;top:470px;width:142px;height:20px;border-radius:0 0 9px 9px"></div>
<div class="arl" style="left:1758.5px;top:477.5px"></div>
<div class="arr" style="left:1882.5px;top:477.5px"></div>
<div class="t " style="left:1767.5px;top:474.5px">Frame Step:</div>
<div class="t " style="right:42.5px;top:474.5px;letter-spacing:.5px">1</div>
<div class="t " style="left:1608px;top:495px">Aspect Ratio:</div>
<div class="t " style="left:1759.5px;top:495px">Frame Rate:</div>
<div class="n" style="left:1601px;top:512px;width:143px;height:20px;border-radius:9px 9px 0 0"></div>
<div class="arl" style="left:1607.5px;top:518.5px"></div>
<div class="arr" style="left:1732.5px;top:518.5px"></div>
<div class="t " style="left:1617.5px;top:515.5px">X:</div>
<div class="t " style="right:192.5px;top:515.5px;letter-spacing:.5px">1.000</div>
<div class="n" style="left:1601px;top:531px;width:143px;height:19px;border-radius:0 0 9px 9px"></div>
<div class="arl" style="left:1607.5px;top:537.75px"></div>
<div class="arr" style="left:1732.5px;top:537.75px"></div>
<div class="t " style="left:1617.5px;top:534.75px">Y:</div>
<div class="t " style="right:192.5px;top:534.75px;letter-spacing:.5px">1.000</div>
<div class="m" style="left:1752px;top:512px;width:142px;height:19px;border-radius:5px 5px 5px 5px"></div>
<div class="t w" style="left:1759.5px;top:515.5px">24 fps</div>
<div class="ud" style="left:1884px;top:514.5px"></div>
<div class="t " style="left:1759.5px;top:535px">Time Remapping:</div>
<div class="n" style="left:1752px;top:551px;width:72px;height:20px;border-radius:9px 0 0 9px"></div>
<div class="arl" style="left:1758.5px;top:558.25px"></div>
<div class="arr" style="left:1812px;top:558.25px"></div>
<div class="t " style="left:1767.5px;top:555.25px">Ol:</div>
<div class="t " style="right:110px;top:555.25px;letter-spacing:.5px">100</div>
<div class="n" style="left:1823px;top:551px;width:71px;height:20px;border-radius:0 9px 9px 0"></div>
<div class="arl" style="left:1829px;top:558.25px"></div>
<div class="arr" style="left:1882.5px;top:558.25px"></div>
<div class="t " style="left:1838px;top:555.25px">Ne:</div>
<div class="t " style="right:39.5px;top:555.25px;letter-spacing:.5px">100</div>
<div class="c" style="left:1604.5px;top:556px"></div>
<div class="t " style="left:1625px;top:556px">Border</div>
<div class="c" style="left:1679px;top:556px;opacity:.55"></div>
<div class="t g" style="left:1700px;top:556px">Crop</div>
<div class="sep" style="left:1598px;top:580px;width:299px"></div>
<div class="trr" style="left:1607px;top:588px"></div>
<div class="c" style="left:1618px;top:585.5px"></div>
<div class="t " style="left:1637px;top:585.5px;font-size:12px">Stamp</div>
<svg class="a" style="left:1880px;top:583.5px" width="16" height="16"><path d="M0 0L16 16" stroke="#a0a0a0" stroke-width="1"/><path d="M0 1L15 16" stroke="#505050" stroke-width="1"/><path d="M5.76 0L16 10.24" stroke="#a0a0a0" stroke-width="1"/><path d="M5.76 1L15 10.24" stroke="#505050" stroke-width="1"/><path d="M10.88 0L16 5.12" stroke="#a0a0a0" stroke-width="1"/><path d="M10.88 1L15 5.12" stroke="#505050" stroke-width="1"/></svg>
<div class="sep" style="left:1598px;top:605px;width:299px"></div>
<div class="tri" style="left:1606px;top:612.5px"></div>
<div class="t " style="left:1619px;top:609.5px;font-size:12px">Output</div>
<svg class="a" style="left:1880px;top:607.5px" width="16" height="16"><path d="M0 0L16 16" stroke="#a0a0a0" stroke-width="1"/><path d="M0 1L15 16" stroke="#505050" stroke-width="1"/><path d="M5.76 0L16 10.24" stroke="#a0a0a0" stroke-width="1"/><path d="M5.76 1L15 10.24" stroke="#505050" stroke-width="1"/><path d="M10.88 0L16 5.12" stroke="#a0a0a0" stroke-width="1"/><path d="M10.88 1L15 5.12" stroke="#505050" stroke-width="1"/></svg>
<div class="tx" style="left:1601px;top:637px;width:273px;height:19px;border-radius:5px 0 0 5px;background:linear-gradient(#a0a0a0,#b8b8b8)"></div>
<div class="t " style="left:1608px;top:640px">/tmp\</div>
<div class="b" style="left:1873px;top:637px;width:21px;height:19px;border-radius:0 5px 5px 0"></div>
<svg class="a" style="left:1876px;top:639px;" width="16" height="16"><path d="M1 5H6L7 3H14V14H1Z" fill="#f0e0a0" stroke="#333" stroke-width=".8"/><rect x="6" y="1" width="6" height="6" fill="#eee" stroke="#333" stroke-width=".6"/></svg>
<div class="c" style="left:1604.5px;top:665.5px"><svg width="14" height="14" style="position:absolute;left:0;top:-2px"><path d="M2.5 7L5.5 10.5L11.5 1.5" fill="none" stroke="#fff" stroke-width="2"/></svg></div>
<div class="t " style="left:1625px;top:665px">Overwrite</div>
<div class="c" style="left:1755px;top:665.5px"><svg width="14" height="14" style="position:absolute;left:0;top:-2px"><path d="M2.5 7L5.5 10.5L11.5 1.5" fill="none" stroke="#fff" stroke-width="2"/></svg></div>
<div class="t " style="left:1776px;top:665px">File Extensions</div>
<div class="c" style="left:1604.5px;top:687.5px"></div>
<div class="t " style="left:1625px;top:687px">Placeholders</div>
<div class="m" style="left:1601px;top:710px;width:143px;height:18px;border-radius:5px 5px 5px 5px"></div>
<div class="t w" style="left:1625.5px;top:713.25px">PNG</div>
<div class="ud" style="left:1734px;top:712.25px"></div>
<svg class="a" style="left:1606px;top:711px;" width="16" height="17"><rect x="1.5" y="1.5" width="12" height="14" fill="#eee" stroke="#333" stroke-width=".8"/><path d="M2 9Q6 6 9 9T13 8V15H2Z" fill="#d06a6a"/><rect x="2" y="12" width="11" height="3" fill="#8a80c0"/></svg>
<div class="m" style="left:1752px;top:710px;width:46px;height:18px;border-radius:5px 0 0 5px"></div>
<div class="t w" style="left:1752.5px;width:45.5px;top:712px;text-align:center">BW</div>
<div class="m" style="left:1798px;top:710px;width:46px;height:18px;border-radius:0"></div>
<div class="t w" style="left:1798px;width:46.5px;top:712px;text-align:center">RGB</div>
<div class="m sel" style="left:1844px;top:710px;width:50px;height:18px;border-radius:0 5px 5px 0"></div>
<div class="t " style="left:1844.5px;width:49px;top:712px;text-align:center">RGBA</div>
<div class="t " style="left:1608px;top:734.5px">Color Depth:</div>
<div class="m sel" style="left:1704px;top:732px;width:94px;height:18px;border-radius:5px 0 0 5px"></div>
<div class="t " style="left:1704px;width:94px;top:734.5px;text-align:center">8</div>
<div class="m" style="left:1798px;top:732px;width:96px;height:18px;border-radius:0 5px 5px 0"></div>
<div class="t w" style="left:1798px;width:95.5px;top:734.5px;text-align:center">16</div>
<div class="n" style="left:1601px;top:753px;width:293px;height:19px;border-radius:9px 9px 9px 9px"></div>
<div class="t " style="left:1615.5px;top:757px">Compression:</div>
<div class="t " style="right:41.5px;top:757px;letter-spacing:.5px">100%</div>
<div class="sep" style="left:1598px;top:782px;width:299px"></div>
<div class="tri" style="left:1606px;top:791.5px"></div>
<div class="t " style="left:1619px;top:788.5px;font-size:12px">Sampling</div>
<svg class="a" style="left:1880px;top:786.5px" width="16" height="16"><path d="M0 0L16 16" stroke="#a0a0a0" stroke-width="1"/><path d="M0 1L15 16" stroke="#505050" stroke-width="1"/><path d="M5.76 0L16 10.24" stroke="#a0a0a0" stroke-width="1"/><path d="M5.76 1L15 10.24" stroke="#505050" stroke-width="1"/><path d="M10.88 0L16 5.12" stroke="#a0a0a0" stroke-width="1"/><path d="M10.88 1L15 5.12" stroke="#505050" stroke-width="1"/></svg>
<div class="m" style="left:1601px;top:815px;width:252px;height:19px;border-radius:5px 0 0 5px"></div>
<div class="t w" style="left:1608.5px;top:818.5px">Final</div>
<div class="ud" style="left:1843.5px;top:817.5px"></div>
<div class="b" style="left:1853px;top:815px;width:20px;height:19px;border-radius:0"></div>
<svg class="a" style="left:1856px;top:817.5px;" width="14" height="14"><path d="M7 1.5V12.5M1.5 7H12.5" stroke="#111" stroke-width="4"/><path d="M7 2.5V11.5M2.5 7H11.5" stroke="#fff" stroke-width="2"/></svg>
<div class="b" style="left:1873px;top:815px;width:21px;height:19px;border-radius:0 5px 5px 0"></div>
<svg class="a" style="left:1876px;top:817.5px;" width="14" height="14"><path d="M1.5 7H12.5" stroke="#111" stroke-width="4"/><path d="M2.5 7H11.5" stroke="#fff" stroke-width="2"/></svg>
<div class="m" style="left:1601px;top:839px;width:143px;height:19px;border-radius:5px 5px 5px 5px"></div>
<div class="t w" style="left:1608.5px;top:842.75px">Path Tracing</div>
<div class="ud" style="left:1734px;top:841.75px"></div>
<div class="c" style="left:1755px;top:842.5px"><svg width="14" height="14" style="position:absolute;left:0;top:-2px"><path d="M2.5 7L5.5 10.5L11.5 1.5" fill="none" stroke="#fff" stroke-width="2"/></svg></div>
<div class="t " style="left:1776px;top:842.5px">Square Samples</div>
<div class="t " style="left:1608px;top:868.5px">Settings:</div>
<div class="t " style="left:1759.5px;top:868.5px">Samples:</div>
<div class="n" style="left:1601px;top:884px;width:143px;height:21px;border-radius:9px 9px 0 0"></div>
<div class="arl" style="left:1607.5px;top:891px"></div>
<div class="arr" style="left:1732.5px;top:891px"></div>
<div class="t " style="left:1617.5px;top:888px">Seed:</div>
<div class="t " style="right:192.5px;top:888px;letter-spacing:.5px">0</div>
<div class="n" style="left:1601px;top:903px;width:143px;height:22px;border-radius:0 0 0 0"></div>
<div class="arl" style="left:1607.5px;top:910.5px"></div>
<div class="arr" style="left:1732.5px;top:910.5px"></div>
<div class="t " style="left:1617.5px;top:907.5px">Clamp Direct:</div>
<div class="t " style="right:192.5px;top:907.5px;letter-spacing:.5px">0.00</div>
<div class="n" style="left:1601px;top:923px;width:143px;height:20px;border-radius:0 0 9px 9px"></div>
<div class="arl" style="left:1607.5px;top:930.25px"></div>
<div class="arr" style="left:1732.5px;top:930.25px"></div>
<div class="t " style="left:1617.5px;top:927.25px">Clamp Indirect:</div>
<div class="t " style="right:192.5px;top:927.25px;letter-spacing:.5px">0.00</div>
<div class="n" style="left:1752px;top:884px;width:142px;height:21px;border-radius:9px 9px 0 0"></div>
<div class="arl" style="left:1758.5px;top:891px"></div>
<div class="arr" style="left:1882.5px;top:891px"></div>
<div class="t " style="left:1768.5px;top:888px">Render:</div>
<div class="t " style="right:42.5px;top:888px;letter-spacing:.5px">24</div>
<div class="n" style="left:1752px;top:903px;width:142px;height:21px;border-radius:0 0 9px 9px"></div>
<div class="arl" style="left:1758.5px;top:910.5px"></div>
<div class="arr" style="left:1882.5px;top:910.5px"></div>
<div class="t " style="left:1768.5px;top:907.5px">Preview:</div>
<div class="t " style="right:42.5px;top:907.5px;letter-spacing:.5px">12</div>
<div class="t " style="left:1608px;top:949.5px">Total Samples:</div>
<div class="t " style="left:1608px;top:964.5px">576 AA</div>
<div class="sep" style="left:1598px;top:983px;width:299px"></div>
<div class="trr" style="left:1607px;top:992.5px"></div>
<div class="t " style="left:1619px;top:990px;font-size:12px">Volume Sampling</div>
<svg class="a" style="left:1880px;top:988px" width="16" height="16"><path d="M0 0L16 16" stroke="#a0a0a0" stroke-width="1"/><path d="M0 1L15 16" stroke="#505050" stroke-width="1"/><path d="M5.76 0L16 10.24" stroke="#a0a0a0" stroke-width="1"/><path d="M5.76 1L15 10.24" stroke="#505050" stroke-width="1"/><path d="M10.88 0L16 5.12" stroke="#a0a0a0" stroke-width="1"/><path d="M10.88 1L15 5.12" stroke="#505050" stroke-width="1"/></svg>
<div class="sep" style="left:1598px;top:1007px;width:299px"></div>
<div class="trr" style="left:1607px;top:1016px"></div>
<div class="t " style="left:1619px;top:1013.5px;font-size:12px">Light Paths</div>
<svg class="a" style="left:1880px;top:1011.5px" width="16" height="16"><path d="M0 0L16 16" stroke="#a0a0a0" stroke-width="1"/><path d="M0 1L15 16" stroke="#505050" stroke-width="1"/><path d="M5.76 0L16 10.24" stroke="#a0a0a0" stroke-width="1"/><path d="M5.76 1L15 10.24" stroke="#505050" stroke-width="1"/><path d="M10.88 0L16 5.12" stroke="#a0a0a0" stroke-width="1"/><path d="M10.88 1L15 5.12" stroke="#505050" stroke-width="1"/></svg>
<svg class="a" style="left:1594px;top:1018px" width="12" height="12"><path d="M0 0L12 12" stroke="#a0a0a0" stroke-width="1"/><path d="M0 1L11 12" stroke="#505050" stroke-width="1"/><path d="M4.32 0L12 7.68" stroke="#a0a0a0" stroke-width="1"/><path d="M4.32 1L11 7.68" stroke="#505050" stroke-width="1"/><path d="M8.16 0L12 3.84" stroke="#a0a0a0" stroke-width="1"/><path d="M8.16 1L11 3.84" stroke="#505050" stroke-width="1"/></svg>
<div class="a" style="left:0;top:1032px;width:1920px;height:48px;background:linear-gradient(90deg,#9a9a9a 0px,#c8c8c8 40px,#e6e6e6 90px,#f0f0f0 140px,#f2f2f2 1500px,#e8e8e8 1580px,#c4c4c4 1680px,#b4b4b4 1800px,#b8b8b8 1920px);border-top:1px solid #4a4a4a"></div>
<div class="a" style="left:0;top:1033px;width:1920px;height:1px;background:rgba(255,255,255,.7)"></div>
<div class="a" style="left:406px;top:1034px;width:64px;height:46px;border:1px solid #8a8a8a;border-radius:2px;background:linear-gradient(#fafafa,#f0f0f0)"></div>
<div class="a" style="left:1402px;top:1034px;width:63px;height:46px;border:1px solid #8a8a8a;border-radius:2px;background:linear-gradient(#fafafa,#f0f0f0)"></div>
<div class="a" style="left:1466px;top:1034px;width:2px;height:46px;background:linear-gradient(90deg,#999,#fff)"></div>
<svg class="a" style="left:11px;top:1034px;" width="44" height="44"><defs><radialGradient id="orb" cx="50%" cy="30%" r="70%"><stop offset="0" stop-color="#9ad8f8"/><stop offset=".45" stop-color="#2a7ab8"/><stop offset=".8" stop-color="#0a4a8a"/><stop offset="1" stop-color="#20a0e0"/></radialGradient></defs><circle cx="22" cy="22" r="21" fill="url(#orb)" stroke="#083868" stroke-width="1.2"/><path d="M9 12Q14 8 21 11L19.5 21Q14 18.5 7 21Z" fill="#f46a24"/><path d="M23 11Q29 14 36 10L34 20Q28 23 21.5 21Z" fill="#8ac838"/><path d="M7 23Q13 20 19 22.5L17 33Q12 30 5 33Z" fill="#3aa8ec"/><path d="M21 23Q27 25.5 34 22L32 32Q26 35 19 33Z" fill="#f8c828"/><ellipse cx="22" cy="13" rx="15" ry="9" fill="rgba(255,255,255,.22)"/></svg>
<svg class="a" style="left:84px;top:1037px;" width="39" height="39"><defs><radialGradient id="fls" cx="40%" cy="35%" r="70%"><stop offset="0" stop-color="#e8e8e8"/><stop offset=".6" stop-color="#7a7a7a"/><stop offset="1" stop-color="#2a2a2a"/></radialGradient><linearGradient id="flf" x1="0" y1="0" x2="1" y2="1"><stop offset="0" stop-color="#fff070"/><stop offset=".5" stop-color="#f8b020"/><stop offset="1" stop-color="#e05010"/></linearGradient></defs><circle cx="19.5" cy="19.5" r="18.5" fill="url(#fls)" stroke="#222" stroke-width="1"/><circle cx="19.5" cy="20" r="13" fill="#1a1a1a"/><path d="M11 13Q19 8 27 12Q28 26 19 36Q9 27 11 13Z" fill="url(#flf)"/><path d="M13 11Q18 5 25 9Q28 13 24 14Q19 12 13 11Z" fill="#7ac040"/><path d="M21 8L27 1" stroke="#5a9030" stroke-width="2"/></svg>
<svg class="a" style="left:150px;top:1040px;" width="39" height="31"><rect x="1" y="1" width="37" height="29" fill="#1a3a7a" stroke="#b8c0d0" stroke-width="2"/><rect x="8" y="5" width="12" height="10" fill="#e8f0f8"/><rect x="12" y="8" width="12" height="12" fill="#f0f6fa" stroke="#5a8aa8" stroke-width=".6"/><rect x="17" y="11" width="14" height="13" fill="#f8fbfd" stroke="#5a8aa8" stroke-width=".6"/><rect x="18" y="13" width="4" height="10" fill="#3a9a8a"/><rect x="3" y="25" width="33" height="3" fill="#0a1a3a"/></svg>
<svg class="a" style="left:217px;top:1036px;" width="40" height="40"><path d="M6 26Q0 14 12 8Q24 2 34 10Q38 16 30 18Q24 19 28 26Q30 33 20 34Q10 34 6 26Z" fill="#c8e0f8" stroke="#6a98c8" stroke-width="1"/><circle cx="11" cy="20" r="3" fill="#e83a3a"/><circle cx="15" cy="13" r="3" fill="#50c050"/><circle cx="23" cy="10" r="3" fill="#f8a020"/><circle cx="17" cy="26" r="2.5" fill="#fff"/><path d="M20 38L33 8" stroke="#e88a20" stroke-width="2.5"/><path d="M31 4L36 6L33 12L30 10Z" fill="#d8b070"/></svg>
<svg class="a" style="left:285px;top:1036px;" width="39" height="40"><path d="M5 21A14 14 0 0 1 33 19H13A7 7 0 0 0 27 24H33A14 14 0 0 1 5 21Z" fill="#2a9ae8"/><path d="M13 16A7 7 0 0 1 26 16Z" fill="#fff"/><path d="M3 34Q0 28 10 18Q24 5 34 4Q40 6 34 14" fill="none" stroke="#f8c020" stroke-width="3"/></svg>
<svg class="a" style="left:352px;top:1038px;" width="37" height="37"><circle cx="18.5" cy="18.5" r="17" fill="#e0402a"/><path d="M18.5 18.5L3.8 27A17 17 0 0 0 25 34.3Z" fill="#40a040"/><path d="M18.5 18.5L25 34.3A17 17 0 0 0 33.2 10H18.5Z" fill="#f8c820"/><circle cx="18.5" cy="18.5" r="7.5" fill="#fff"/><circle cx="18.5" cy="18.5" r="6" fill="#3a7ad8"/></svg>
<svg class="a" style="left:418px;top:1036px;" width="40" height="40"><defs><radialGradient id="ffg" cx="55%" cy="30%" r="60%"><stop offset="0" stop-color="#3ab0f0"/><stop offset="1" stop-color="#1a3a90"/></radialGradient><linearGradient id="ffo" x1="0" y1="0" x2="0" y2="1"><stop offset="0" stop-color="#f8a030"/><stop offset="1" stop-color="#e04a18"/></linearGradient></defs><circle cx="21" cy="19" r="15" fill="url(#ffg)"/><path d="M6 7L9 12Q3 20 6 28Q12 38 23 37Q34 36 37 26Q39 16 33 9Q37 20 31 26Q25 32 17 29Q11 26 13 20Q15 16 19 17Q15 13 13 11Z" fill="url(#ffo)"/><path d="M31 7Q40 16 36 28" fill="none" stroke="#f8c830" stroke-width="3"/><path d="M17 17Q22 15 24 19Q22 22 19 21" fill="#f07020"/></svg>
<svg class="a" style="left:486px;top:1041px;" width="35" height="34"><rect x="4" y="1" width="28" height="30" rx="2" fill="#b8d8f0" stroke="#7ab0d8" stroke-width="1"/><rect x="1" y="3" width="28" height="30" rx="2" fill="#d8ecfa" stroke="#6aa0d0" stroke-width="1"/><circle cx="14" cy="16" r="9" fill="#f08a20"/><path d="M11 11L20 16L11 21Z" fill="#fff"/></svg>
<svg class="a" style="left:552px;top:1037px;" width="41" height="39"><path d="M3 5H14L16 2H38V30H3Z" fill="#e8c860" stroke="#b89030" stroke-width="1"/><rect x="7" y="3" width="9" height="5" fill="#fff" stroke="#aaa" stroke-width=".5"/><rect x="14" y="6" width="9" height="5" fill="#fff" stroke="#aaa" stroke-width=".5"/><rect x="24" y="8" width="10" height="5" fill="#fff" stroke="#aaa" stroke-width=".5"/><rect x="7" y="3" width="2" height="3" fill="#30a030"/><rect x="16" y="7" width="2" height="2" fill="#e03030"/><rect x="26" y="9" width="2" height="2" fill="#3060e0"/><path d="M2 10H39V34H2Z" fill="#f8e290" stroke="#c8a040" stroke-width="1"/><path d="M9 22Q9 19 12 19H30Q33 19 33 22V37H26V31H16V37H9Z" fill="#6ac0f0" stroke="#2a80c0" stroke-width="1"/></svg>
<svg class="a" style="left:620px;top:1038px;" width="37" height="35"><path d="M3 6L30 1L35 28L8 33Z" fill="#a8b860" stroke="#7a8a40" stroke-width="1"/><path d="M6 24Q18 12 33 8M8 28Q20 18 34 14M10 31Q22 22 34 20" fill="none" stroke="#e8f0c8" stroke-width="1.5"/></svg>
<svg class="a" style="left:686px;top:1037px;" width="38" height="37"><path d="M19 3L33 11V27L19 35L5 27V11Z" fill="none" stroke="#222" stroke-width="4"/><path d="M19 19L33 11M19 19L19 35M19 19L5 11" stroke="#fff" stroke-width="3"/><path d="M19 19L33 11M19 19L19 35M19 19L5 11" stroke="#333" stroke-width="1"/></svg>
<svg class="a" style="left:752px;top:1036px;" width="41" height="41"><path d="M20.5 2L25 6L31 4L32 10L38 13L35 19L38 25L32 28L31 34L25 33L20.5 39L16 33L10 34L9 28L3 25L6 19L3 13L9 10L10 4L16 6Z" fill="#222"/><circle cx="20.5" cy="20.5" r="11" fill="#90d030"/><path d="M26 15A8 8 0 1 0 27 24H20V20" fill="none" stroke="#111" stroke-width="4"/></svg>
<svg class="a" style="left:821px;top:1037px;" width="37" height="35"><rect x="1.5" y="1.5" width="34" height="32" fill="#0a1a3a" stroke="#30b0f0" stroke-width="3"/><text x="18.5" y="25" text-anchor="middle" font-family="Liberation Sans" font-size="19" fill="#30b8f8">Ps</text></svg>
<svg class="a" style="left:887px;top:1037px;" width="37" height="35"><rect x="1.5" y="1.5" width="34" height="32" fill="#3a0a08" stroke="#f04a20" stroke-width="3"/><text x="18.5" y="25" text-anchor="middle" font-family="Liberation Sans" font-size="19" fill="#f06a40">Fl</text></svg>
<svg class="a" style="left:952px;top:1037px;" width="37" height="35"><rect x="1.5" y="1.5" width="34" height="32" fill="#3a1a08" stroke="#f08a20" stroke-width="3"/><text x="18.5" y="25" text-anchor="middle" font-family="Liberation Sans" font-size="19" fill="#f89a30">Ai</text></svg>
<svg class="a" style="left:1020px;top:1037px;" width="33" height="37"><path d="M6 2H30L27 24H3Z" fill="#5a90d8" stroke="#2a5aa8" stroke-width="1"/><path d="M6 2H30L28 14Q16 10 5 14Z" fill="#8ab8f0"/><path d="M15 24L12 34M18 24L21 34M10 34H24" stroke="#333" stroke-width="2"/></svg>
<svg class="a" style="left:1084px;top:1035px;" width="40" height="41"><rect x="1" y="1" width="38" height="39" rx="3" fill="#1a4aa8" stroke="#0a1a4a" stroke-width="2"/><rect x="2" y="2" width="36" height="17" fill="#0a2a7a"/><text x="20" y="16" text-anchor="middle" font-family="Liberation Sans" font-weight="bold" font-size="13" fill="#fff">DEV</text><text x="20" y="34" text-anchor="middle" font-family="Liberation Sans" font-weight="bold" font-size="14" fill="#6ab0f8">C++</text></svg>
<svg class="a" style="left:1151px;top:1036px;" width="38" height="40"><rect x="2" y="2" width="16" height="17" fill="#d82a20"/><rect x="20" y="2" width="16" height="17" fill="#50c030"/><rect x="2" y="21" width="16" height="17" fill="#d8d020"/><rect x="20" y="21" width="16" height="17" fill="#7a30c8"/></svg>
<svg class="a" style="left:1219px;top:1037px;" width="37" height="38"><path d="M3 1H24L33 10V37H3Z" fill="#f4f4f4" stroke="#c0c0c0" stroke-width="1"/><path d="M6 6H20M6 10H22M6 14H18M6 18H24M6 22H14M6 26H16M6 30H14" stroke="#ccc" stroke-width="1"/><path d="M22 18Q16 18 16 24V27H22V28H14Q12 28 12 32Q12 36 17 36H22V32Q22 29 26 29H30V24Q30 18 26 18Z" fill="#3a70b0"/><path d="M26 38Q32 38 32 32V29H26V28H34Q36 28 36 24" fill="#f8d030"/></svg>
<svg class="a" style="left:1282px;top:1037px;" width="39" height="37"><path d="M2 3H28V36H2Z" fill="#e8f0d8" stroke="#8a9a6a" stroke-width="1"/><ellipse cx="15" cy="18" rx="10" ry="8" fill="#8ac030"/><circle cx="17" cy="13" r="3" fill="#fff" stroke="#333" stroke-width=".8"/><path d="M30 2L37 5L22 30L18 32L19 28Z" fill="#f0c030" stroke="#8a5a10" stroke-width="1"/><path d="M34 1L38 3L37 5L33 3Z" fill="#e04040"/></svg>
<svg class="a" style="left:1352px;top:1036px;" width="31" height="37"><rect x="1" y="1" width="29" height="35" rx="2" fill="#2a2e32" stroke="#111" stroke-width="1"/><path d="M6 26Q8 12 22 8Q16 14 20 20Q24 28 18 30Q14 22 8 28Z" fill="#f0f0f0"/></svg>
<svg class="a" style="left:1411px;top:1038px;" width="44" height="36"><path d="M3 22L16 12L12 9L24 9A12 12 0 1 1 12 28L4 31L9 24Z" fill="#f08a1a" stroke="#fff" stroke-width="1"/><circle cx="26" cy="19" r="7.5" fill="#fff"/><circle cx="26" cy="19" r="4.5" fill="#2a5aa8"/></svg>
<svg class="a" style="left:1480px;top:1037px;" width="40" height="40"><circle cx="20" cy="20" r="19" fill="#3a3a3a" stroke="#7a7a7a" stroke-width="1.5"/><circle cx="20" cy="10" r="3" fill="#f08a20"/><path d="M8 14Q14 18 20 16Q26 18 32 14M17 16L18 33M23 16L22 33" fill="none" stroke="#f08a20" stroke-width="2.5"/></svg>
<svg class="a" style="left:1549px;top:1036px;" width="36" height="40"><path d="M2 16L14 6L28 10V32L14 36L2 28Z" fill="#e8c8a8" stroke="#5a4a3a" stroke-width="1"/><path d="M14 6V20L28 10M14 20L2 16" fill="none" stroke="#5a4a3a" stroke-width="1"/><path d="M8 38L10 32L32 4L36 7L14 34Z" fill="#d83030" stroke="#6a1010" stroke-width="1"/></svg>
<svg class="a" style="left:1611px;top:1037px;" width="41" height="38"><path d="M4 14Q10 4 24 10Q32 2 34 8Q36 16 30 20Q26 30 14 28Q4 26 4 14Z" fill="#6a6a5a"/><circle cx="8" cy="16" r="4" fill="#111"/><circle cx="16" cy="12" r="4" fill="#eee" stroke="#222" stroke-width="1"/><circle cx="24" cy="12" r="4" fill="#eee" stroke="#222" stroke-width="1"/><circle cx="16" cy="12" r="1.5" fill="#111"/><circle cx="24" cy="12" r="1.5" fill="#111"/><path d="M18 24L36 34" stroke="#c88a30" stroke-width="2"/><circle cx="37" cy="35" r="2" fill="#333"/></svg>
<div class="t w" style="left:1677px;top:1047px;font-size:13px;color:#f4f4f4">ES</div>
<svg class="a" style="left:1716px;top:1052px;" width="13" height="9"><path d="M1 8L6.5 2L12 8Z" fill="#fff" stroke="#777" stroke-width="1"/></svg>
<svg class="a" style="left:1745px;top:1046px;" width="21" height="21"><path d="M2 16Q0 6 8 3L10 10L12 3Q20 6 18 16Q14 20 12 14H8Q6 20 2 16Z" fill="#1a7ad8" stroke="#0a3a8a" stroke-width=".8"/></svg>
<svg class="a" style="left:1775px;top:1046px;" width="21" height="21"><path d="M2 7H6L11 3V18L6 14H2Z" fill="#eee" stroke="#444" stroke-width="1"/><path d="M13 7Q15 10.5 13 14M15 5Q18.5 10.5 15 16M17 3Q22 10.5 17 18" fill="none" stroke="#eee" stroke-width="1.3"/></svg>
<div class="t" style="left:1836px;top:1038px;font-size:14px;line-height:17px;color:#f8f8f8;text-shadow:0 0 3px rgba(0,0,0,.25)">15:22</div>
<div class="t" style="left:1816px;top:1059px;font-size:14px;line-height:17px;color:#f8f8f8;text-shadow:0 0 3px rgba(0,0,0,.25)">17/09/2014</div>
<div class="a" style="left:1905px;top:1034px;width:15px;height:46px;border:1px solid #8a8a8a;background:linear-gradient(90deg,#d8d8d8,#c0c0c0)"></div>
<div class="a" style="left:0;top:0;width:1920px;height:28px;overflow:hidden">
<div class="a" style="left:992px;top:6px;width:55px;height:22px;border-radius:50%;background:#5a6a6a;opacity:0.5;filter:blur(6px)"></div>
<div class="a" style="left:1110px;top:6px;width:45px;height:22px;border-radius:50%;background:#c87a8a;opacity:0.45;filter:blur(6px)"></div>
<div class="a" style="left:1235px;top:6px;width:45px;height:22px;border-radius:50%;background:#ffffff;opacity:0.9;filter:blur(6px)"></div>
<div class="a" style="left:1355px;top:6px;width:50px;height:22px;border-radius:50%;background:#8a7a9a;opacity:0.4;filter:blur(6px)"></div>
<div class="a" style="left:1470px;top:6px;width:45px;height:22px;border-radius:50%;background:#c87a8a;opacity:0.45;filter:blur(6px)"></div>
<div class="a" style="left:755px;top:6px;width:45px;height:22px;border-radius:50%;background:#ffffff;opacity:0.9;filter:blur(6px)"></div>
<div class="a" style="left:880px;top:6px;width:40px;height:22px;border-radius:50%;background:#ffffff;opacity:0.9;filter:blur(6px)"></div>
</div>
<svg class="a" style="left:2px;top:4px;" width="20" height="19"><path d="M2 12 L9 6.5 L6.5 4.8 L12.5 4.8 A6.5 6.5 0 1 1 6 14.5 L1.5 16 L4.5 12.5Z" fill="#f08a1a"/><circle cx="13" cy="11" r="3.8" fill="#fff"/><circle cx="13" cy="11" r="2.2" fill="#2a5aa8"/></svg>
<div class="t" style="left:25px;top:5px;font-size:15px;line-height:18px;color:#111">Blender [C:\Users\HP\Desktop\My life project\aqui\realistic texturing in blender.blend]</div>
<div class="a" style="left:1779px;top:-3px;width:138px;height:27px;border:1px solid #a0a098;border-radius:0 0 5px 5px;background:rgba(255,255,235,.35);box-shadow:inset 0 0 0 1px rgba(255,255,255,.6)"></div>
<div class="a" style="left:1817px;top:0;width:1px;height:23px;background:#b8b8b8"></div>
<div class="a" style="left:1853px;top:0;width:1px;height:23px;background:#b8b8b8"></div>
<svg class="a" style="left:1786px;top:2px;" width="110" height="22"><defs><linearGradient id="wbg" x1="0" y1="0" x2="0" y2="1"><stop offset="0" stop-color="#fafafa"/><stop offset="1" stop-color="#d8d8dc"/></linearGradient></defs><rect x="3.5" y="12.5" width="17" height="5" rx="1" fill="url(#wbg)" stroke="#4a4a62" stroke-width="1.2"/><rect x="43" y="1.5" width="15" height="14" rx="1.5" fill="url(#wbg)" stroke="#4a4a62" stroke-width="1.2"/><rect x="39.5" y="4.5" width="15" height="14" rx="1.5" fill="url(#wbg)" stroke="#4a4a62" stroke-width="1.2"/><rect x="44.5" y="9.5" width="5.5" height="3.5" fill="#fff" stroke="#4a4a62" stroke-width="1"/><path d="M91 3.5H96L98.5 7L101 3.5H106L101.5 10L106 16.5H101L98.5 13L96 16.5H91L95.5 10Z" fill="url(#wbg)" stroke="#4a4a62" stroke-width="1.2" stroke-linejoin="round"/></svg>
</body></html>
